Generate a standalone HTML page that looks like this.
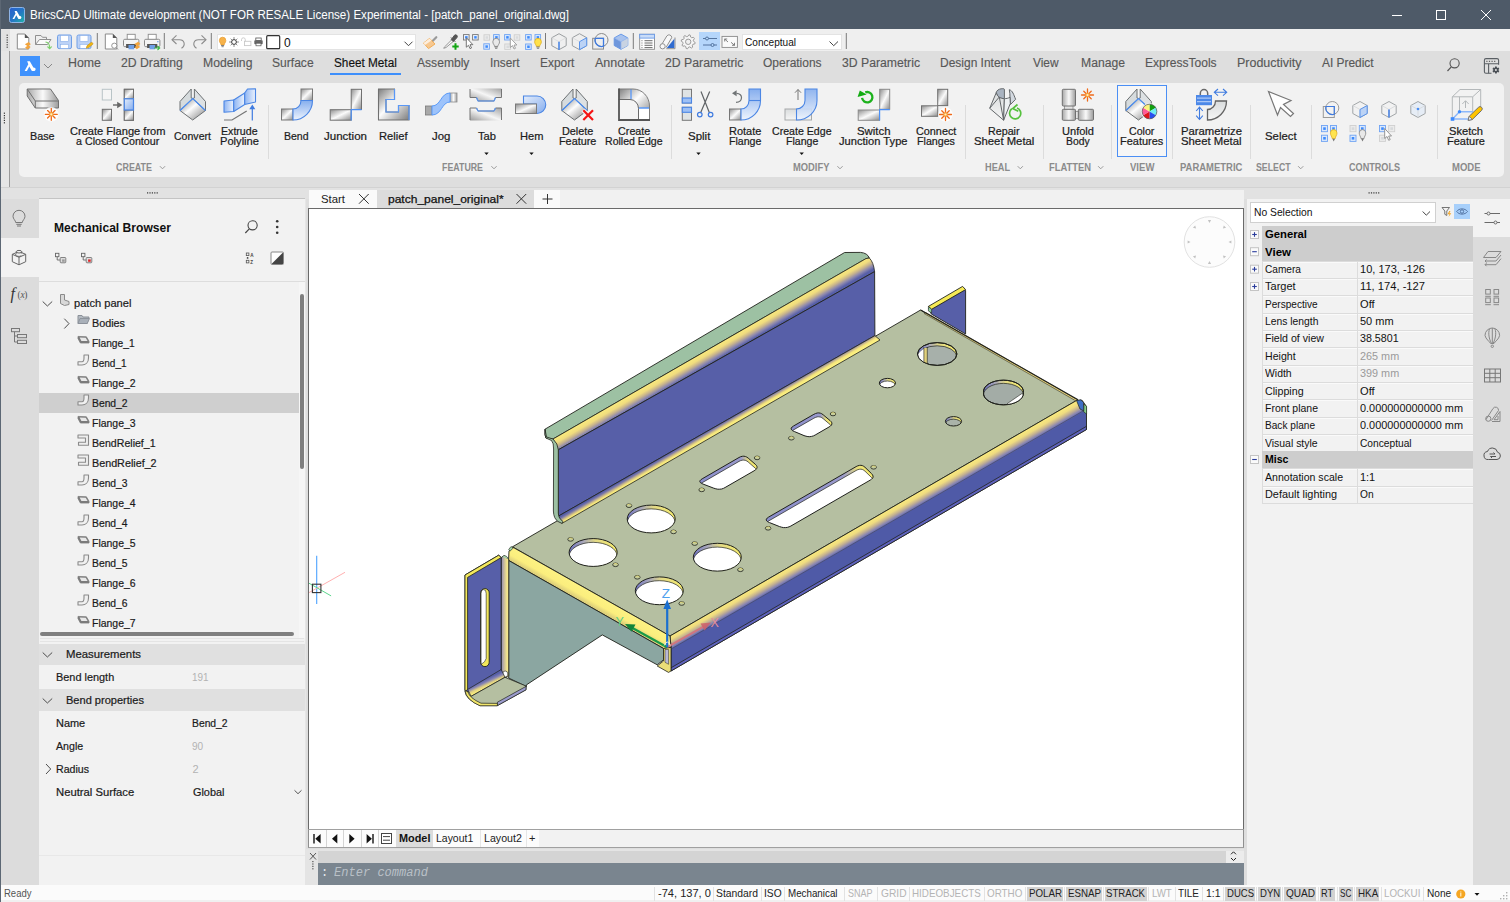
<!DOCTYPE html><html lang="en"><head><meta charset="utf-8"><title>BricsCAD</title>
<style>
*{box-sizing:border-box;margin:0;padding:0}
html,body{width:1510px;height:902px;overflow:hidden;background:#dedede}
body{position:relative;font-family:"Liberation Sans",sans-serif;font-size:12px;color:#222;-webkit-font-smoothing:antialiased}
.abs{position:absolute}
.t{position:absolute;white-space:nowrap;line-height:1}
svg{position:absolute;overflow:visible}
#title{left:0;top:0;width:1510px;height:29px;background:#4e5a68}
#title .t{color:#fff;font-size:13.4px;left:30px;top:8px}
#tbar{left:0;top:29px;width:1510px;height:22px;background:#efefef}
#tabs{left:0;top:51px;width:1510px;height:32px;background:#dedede}
#tabs .t{font-size:13px;color:#555;top:6px}
#rib{left:19px;top:83px;width:1485px;height:94px;background:#f2f2f2;border-radius:5px}
.rl{position:absolute;white-space:nowrap;text-align:center;font-size:12px;line-height:10.4px;color:#1e1e1e;transform:translateX(-50%)}
.gl{position:absolute;white-space:nowrap;font-size:10.5px;font-weight:bold;color:#8c8c8c;letter-spacing:.2px;line-height:1}
.vsep{position:absolute;width:1px;background:#dcdcdc;top:105px;height:54px}
</style>

</head><body>
<!-- sec_top -->
<div class="abs" style="left:0px;top:0px;width:1510px;height:29px;background:#4e5a68;"></div>
<div class="abs" style="left:0px;top:0px;width:1px;height:902px;background:#5c6774;"></div>
<div class="t" style="left:30.00px;top:8.84px;font-size:12px;transform:scaleX(0.9647);transform-origin:0 0;color:#fff;">BricsCAD Ultimate development (NOT FOR RESALE License) Experimental - [patch_panel_original.dwg]</div>
<svg style="left:9px;top:7px" width="16" height="16" viewBox="0 0 16 16"><defs><linearGradient id="tlg" x1="0" y1="0" x2="1" y2="1"><stop offset="0" stop-color="#2a5fd0"/><stop offset=".55" stop-color="#2478c4"/><stop offset="1" stop-color="#1fb8a6"/></linearGradient></defs><rect x=".5" y=".5" width="15" height="15" rx="2" fill="url(#tlg)" stroke="#8fb4e6" stroke-width="1"/><path d="M5.6 4h2.1l2.9 5c1.2 0 1.8.6 1.8 1.5s-.7 1.5-1.6 1.5H9.4L7.3 8.3l-2 3.7H3.5l3-5.5z" fill="#fff"/></svg>
<svg style="left:1380px;top:0" width="130" height="29" viewBox="0 0 130 29"><g stroke="#fff" stroke-width="1" fill="none"><path d="M12 15.5h10"/><rect x="56.5" y="10.5" width="9" height="9"/><path d="M101 10l10 10M111 10l-10 10"/></g></svg>
<div class="abs" style="left:1px;top:29px;width:1509px;height:22px;background:#efefef;"></div>
<div class="abs" style="left:1px;top:29px;width:9px;height:22px;background:#e2e2e2;"></div>
<div class="abs" style="left:1px;top:51px;width:1509px;height:148px;background:#dedede;"></div>
<div class="abs" style="left:1px;top:51px;width:8px;height:136px;background:#e6e6e6;"></div>
<div class="abs" style="left:9px;top:51px;width:1px;height:136px;background:#9a9a9a;"></div>
<div class="abs" style="left:1px;top:187px;width:1509px;height:1px;background:#d2d2d2;"></div>
<div class="abs" style="left:1px;top:188px;width:1509px;height:11px;background:#e2e2e2;"></div>
<div class="abs" style="left:20px;top:56px;width:20px;height:20px;background:#3f92fd;"></div>
<svg style="left:20px;top:56px" width="20" height="20" viewBox="0 0 20 20"><path d="M7.2 5.2h2.6l3.6 6.2c1.5 0 2.2.7 2.2 1.8s-.8 1.8-2 1.8h-1.7l-2.6-4.6-2.4 4.6H4.6l3.7-6.8z" fill="#fff"/></svg>
<svg style="left:43px;top:63px" width="10" height="6" viewBox="0 0 10 6"><path d="M1 1l4 4 4-4" stroke="#888" fill="none" stroke-width="1"/></svg>
<div class="t" style="left:68.00px;top:57.14px;font-size:12px;transform:scaleX(1.0309);transform-origin:0 0;color:#585858;-webkit-text-stroke:0.15px;">Home</div>
<div class="t" style="left:120.60px;top:57.14px;font-size:12px;transform:scaleX(1.0182);transform-origin:0 0;color:#585858;-webkit-text-stroke:0.15px;">2D Drafting</div>
<div class="t" style="left:203.00px;top:57.14px;font-size:12px;transform:scaleX(1.0144);transform-origin:0 0;color:#585858;-webkit-text-stroke:0.15px;">Modeling</div>
<div class="t" style="left:272.40px;top:57.14px;font-size:12px;transform:scaleX(1.0059);transform-origin:0 0;color:#585858;-webkit-text-stroke:0.15px;">Surface</div>
<div class="t" style="left:333.60px;top:57.14px;font-size:12px;transform:scaleX(0.9807);transform-origin:0 0;color:#111;-webkit-text-stroke:0.15px;">Sheet Metal</div>
<div class="t" style="left:417.00px;top:57.14px;font-size:12px;transform:scaleX(1.0074);transform-origin:0 0;color:#585858;-webkit-text-stroke:0.15px;">Assembly</div>
<div class="t" style="left:490.00px;top:57.14px;font-size:12px;transform:scaleX(0.9796);transform-origin:0 0;color:#585858;-webkit-text-stroke:0.15px;">Insert</div>
<div class="t" style="left:540.00px;top:57.14px;font-size:12px;transform:scaleX(0.9918);transform-origin:0 0;color:#585858;-webkit-text-stroke:0.15px;">Export</div>
<div class="t" style="left:595.00px;top:57.14px;font-size:12px;transform:scaleX(1.0408);transform-origin:0 0;color:#585858;-webkit-text-stroke:0.15px;">Annotate</div>
<div class="t" style="left:664.60px;top:57.14px;font-size:12px;transform:scaleX(1.0223);transform-origin:0 0;color:#585858;-webkit-text-stroke:0.15px;">2D Parametric</div>
<div class="t" style="left:763.00px;top:57.14px;font-size:12px;transform:scaleX(0.9983);transform-origin:0 0;color:#585858;-webkit-text-stroke:0.15px;">Operations</div>
<div class="t" style="left:842.00px;top:57.14px;font-size:12px;transform:scaleX(1.0171);transform-origin:0 0;color:#585858;-webkit-text-stroke:0.15px;">3D Parametric</div>
<div class="t" style="left:940.00px;top:57.14px;font-size:12px;transform:scaleX(0.9984);transform-origin:0 0;color:#585858;-webkit-text-stroke:0.15px;">Design Intent</div>
<div class="t" style="left:1033.00px;top:57.14px;font-size:12px;transform:scaleX(0.9925);transform-origin:0 0;color:#585858;-webkit-text-stroke:0.15px;">View</div>
<div class="t" style="left:1081.00px;top:57.14px;font-size:12px;transform:scaleX(1.0146);transform-origin:0 0;color:#585858;-webkit-text-stroke:0.15px;">Manage</div>
<div class="t" style="left:1145.00px;top:57.14px;font-size:12px;transform:scaleX(1.0033);transform-origin:0 0;color:#585858;-webkit-text-stroke:0.15px;">ExpressTools</div>
<div class="t" style="left:1237.00px;top:57.14px;font-size:12px;transform:scaleX(1.0383);transform-origin:0 0;color:#585858;-webkit-text-stroke:0.15px;">Productivity</div>
<div class="t" style="left:1322.00px;top:57.14px;font-size:12px;transform:scaleX(0.9919);transform-origin:0 0;color:#585858;-webkit-text-stroke:0.15px;">AI Predict</div>
<div class="abs" style="left:330px;top:73px;width:71px;height:2px;background:#3d8ffc;"></div>
<!-- sec_toolbar -->
<div class="abs" style="left:217px;top:34px;width:199px;height:16px;background:#ffffff;border:1px solid #e3e3e3"></div>
<div class="abs" style="left:742px;top:34px;width:100px;height:16px;background:#ffffff;border:1px solid #e3e3e3"></div>
<div class="abs" style="left:699px;top:32px;width:21px;height:18px;background:#b5d6fb;"></div>
<div class="t" style="left:284.00px;top:36.84px;font-size:12px;color:#111;">0</div>
<div class="t" style="left:745.00px;top:36.59px;font-size:11px;transform:scaleX(0.9164);transform-origin:0 0;color:#111;">Conceptual</div>
<svg style="left:0;top:0" width="1510" height="52" viewBox="0 0 1510 52"><rect x="6.6" y="34.6" width="1.2" height="1.2" fill="#444"/><rect x="6.6" y="37" width="1.2" height="1.2" fill="#444"/><rect x="6.6" y="39.4" width="1.2" height="1.2" fill="#444"/><rect x="6.6" y="41.8" width="1.2" height="1.2" fill="#444"/><rect x="6.6" y="44.2" width="1.2" height="1.2" fill="#444"/><rect x="6.6" y="46.6" width="1.2" height="1.2" fill="#444"/><path d="M97.3 33V49" stroke="#7a7a7a" stroke-width="1"/><path d="M164.3 33V49" stroke="#7a7a7a" stroke-width="1"/><path d="M211.3 33V49" stroke="#7a7a7a" stroke-width="1"/><path d="M545.5 33V49" stroke="#7a7a7a" stroke-width="1"/><path d="M633.3 33V49" stroke="#7a7a7a" stroke-width="1"/><path d="M846.3 33V49" stroke="#7a7a7a" stroke-width="1"/><path d="M17.3 34H24.8L28.8 38V49H17.3Z" fill="#fff" stroke="#8a8a8a" stroke-width="1"/><path d="M24.8 34V38H28.8Z" fill="#555"/><path d="M28.7 42.0L30.9 44.3L28.5 45.5L30.7 47.1L27.2 49.5L25.099999999999998 47.3L27.3 46.0L24.9 44.2Z" fill="#f3a43c"/><path d="M35.5 44.5V35.5H41L42.5 37.3H46.5V39.5" fill="none" stroke="#909090" stroke-width="1"/><path d="M35.5 44.5L39.5 39.5H51L47.5 44.5Z" fill="#fafafa" stroke="#909090" stroke-width="1" stroke-linejoin="round"/><path d="M45.5 42C48.5 42.3 49.7 44.5 49.7 48.3M47.5 46.5L49.7 48.8L51.8 46.5" fill="none" stroke="#7ccf6a" stroke-width="1.1"/><rect x="57.5" y="35" width="14" height="13.6" rx="1.6" fill="#bcd2f6" stroke="#709fe6" stroke-width="1"/><rect x="60.5" y="35.6" width="8" height="5.8" fill="#fff" stroke="#8ab0ea" stroke-width=".6"/><rect x="60.5" y="44.3" width="8" height="4" fill="#fff" stroke="#8ab0ea" stroke-width=".6"/><rect x="77" y="35" width="14" height="13.6" rx="1.6" fill="#bcd2f6" stroke="#709fe6" stroke-width="1"/><rect x="80" y="35.6" width="8" height="5.8" fill="#fff" stroke="#8ab0ea" stroke-width=".6"/><rect x="80" y="44.3" width="8" height="4" fill="#fff" stroke="#8ab0ea" stroke-width=".6"/><path d="M86.3 48.2L87 45.8L91 42.5A1.4 1.4 0 0 1 92.8 44.3L88.7 47.6Z" fill="#f2b611" stroke="#c48f10" stroke-width=".6"/><path d="M105.3 34H112.8L116.8 38V49H105.3Z" fill="#fff" stroke="#8a8a8a" stroke-width="1"/><path d="M112.8 34V38H116.8Z" fill="#555"/><circle cx="114.3" cy="45.7" r="2.6" fill="#fff" stroke="#8a8a8a" stroke-width=".9"/><path d="M116.2 47.7L118 49.5" stroke="#8a8a8a" stroke-width="1"/><rect x="127.2" y="34.3" width="8" height="5.2" fill="#fff" stroke="#8a8a8a" stroke-width=".9"/><rect x="123.5" y="39.3" width="15.4" height="7.4" rx="1.3" fill="#f4f4f4" stroke="#8a8a8a" stroke-width="1"/><rect x="126.1" y="44" width="10.2" height="4" fill="#555"/><rect x="128.5" y="45" width="5.6" height="4.3" fill="#6f9fe6"/><path d="M138.2 41.8L140.39999999999998 44.099999999999994L138.0 45.3L140.2 46.9L136.7 49.3L134.6 47.099999999999994L136.79999999999998 45.8L134.39999999999998 44.0Z" fill="#f3a43c"/><rect x="148.2" y="34.3" width="8" height="5.2" fill="#fff" stroke="#8a8a8a" stroke-width=".9"/><rect x="144.5" y="39.3" width="15.4" height="7.4" rx="1.3" fill="#f4f4f4" stroke="#8a8a8a" stroke-width="1"/><rect x="147.1" y="44" width="10.2" height="4" fill="#555"/><rect x="149.5" y="45" width="5.6" height="4.3" fill="#6f9fe6"/><path d="M154 48H159.5M157.5 46L159.7 48L157.5 50" fill="none" stroke="#3fba4a" stroke-width="1.1"/><rect x="157.2" y="41" width="1.3" height="1.3" fill="#6f9fe6"/><path d="M172.3 39.7H179.5C184.5 39.7 186 45 181.5 48.3" fill="none" stroke="#8c8c8c" stroke-width="1.1"/><path d="M176.5 35.3L172 39.7L176.5 44" fill="none" stroke="#8c8c8c" stroke-width="1.1"/><path d="M205.7 39.7H198.5C193.5 39.7 192 45 196.5 48.3" fill="none" stroke="#8c8c8c" stroke-width="1.1"/><path d="M201.5 35.3L206 39.7L201.5 44" fill="none" stroke="#8c8c8c" stroke-width="1.1"/><g transform="translate(222.6 41.3) scale(1.0)"><path d="M-3.2 -.8A3.2 3.3 0 1 1 3.2 -.8C3.2 1.4 1.6 2 1.6 3.6H-1.6C-1.6 2 -3.2 1.4 -3.2 -.8Z" fill="#f6b24a" stroke="#e89a2a" stroke-width=".7"/><path d="M-1.5 4.2H1.5M-1.1 5.4H1.1" stroke="#777" stroke-width=".9"/></g><circle cx="234" cy="42" r="2.4" fill="none" stroke="#333" stroke-width="1"/><path d="M234 37.4V38.6M234 45.4V46.6M229.4 42H230.6M237.4 42H238.6M230.8 38.8L231.6 39.6M236.4 44.4L237.2 45.2M237.2 38.8L236.4 39.6M231.6 44.4L230.8 45.2" stroke="#333" stroke-width=".9"/><rect x="244.5" y="41.3" width="6.4" height="4.3" fill="none" stroke="#c9c9c9" stroke-width=".9"/><path d="M241.5 41V39.7A1.9 1.9 0 0 1 245.3 39.7V41.3" fill="none" stroke="#c9c9c9" stroke-width=".9"/><rect x="255.8" y="38" width="5.4" height="2.4" fill="#fff" stroke="#555" stroke-width=".8"/><rect x="254.3" y="40.2" width="8.4" height="4" rx=".8" fill="#666"/><rect x="256" y="43.2" width="5" height="2.6" fill="#fff" stroke="#555" stroke-width=".7"/><rect x="266.7" y="35.7" width="13" height="13" rx="1" fill="#fff" stroke="#333" stroke-width="1.2"/><path d="M404.5 41.7L408.5 45.7L412.5 41.7" fill="none" stroke="#444" stroke-width="1"/><path d="M829.5 41.5L833.7 45.7L838 41.5" fill="none" stroke="#444" stroke-width="1"/><path d="M436.3 37.2L431.3 42.2" stroke="#9a9a9a" stroke-width="2.2" stroke-linecap="round"/><path d="M423.5 43L429.6 38.4L435 44L428.5 48.6Z" fill="#f7c890" stroke="#f0a84e" stroke-width=".9" stroke-linejoin="round"/><path d="M423.5 43L429.6 38.4L431.5 40.5L425 45Z" fill="#fdeedd"/><path d="M452.5 39L444.3 47.2Q443.3 48.7 443.8 48.3L446 47.5L454.2 40.7" fill="#fafafa" stroke="#8a8a8a" stroke-width=".9"/><path d="M451 37.5L455.3 41.8M454.5 35.2Q456.5 34 457.3 36Q457.5 37.5 455.7 39L453.2 41.5L451.3 39.6Z" fill="#555" stroke="#555" stroke-width="1"/><path d="M455.5 43.3V49.7M452.3 46.5H458.7" stroke="#12a512" stroke-width="2"/><rect x="463.5" y="34.6" width="5.6" height="5.4" fill="#eef3fb" stroke="#777" stroke-width=".9"/><rect x="465.1" y="36.1" width="2.5" height="2.5" fill="#3d8bfd"/><rect x="472.6" y="34.6" width="5.6" height="5.4" fill="#eef3fb" stroke="#777" stroke-width=".9"/><rect x="474.2" y="36.1" width="2.5" height="2.5" fill="#3d8bfd"/><path d="M466.3 37.7V47.2L468.5 45.300000000000004L470.1 48.7L471.5 48.0L470.0 44.7H472.90000000000003Z" fill="#fff" stroke="#666" stroke-width=".9" stroke-linejoin="round"/><rect x="484" y="34.8" width="5.6" height="5.4" fill="#ececec" stroke="#cfcfcf" stroke-width=".9"/><rect x="485.6" y="36.3" width="2.5" height="2.5" fill="#d8dadc"/><rect x="493.6" y="34.6" width="5.6" height="5.4" fill="#dce9fb" stroke="#6fa3f3" stroke-width=".9"/><rect x="495.20000000000005" y="36.1" width="2.5" height="2.5" fill="#3d8bfd"/><rect x="483.8" y="43.8" width="5.6" height="5.4" fill="#dce9fb" stroke="#6fa3f3" stroke-width=".9"/><rect x="485.40000000000003" y="45.3" width="2.5" height="2.5" fill="#3d8bfd"/><g transform="translate(496.2 42.6) scale(1.05)"><path d="M-3.2 -.8A3.2 3.3 0 1 1 3.2 -.8C3.2 1.4 1.6 2 1.6 3.6H-1.6C-1.6 2 -3.2 1.4 -3.2 -.8Z" fill="#e9e9e9" stroke="#777" stroke-width=".7"/><path d="M-1.5 4.2H1.5M-1.1 5.4H1.1" stroke="#777" stroke-width=".9"/></g><rect x="504.6" y="34.6" width="5.6" height="5.4" fill="#dce9fb" stroke="#6fa3f3" stroke-width=".9"/><rect x="506.20000000000005" y="36.1" width="2.5" height="2.5" fill="#3d8bfd"/><rect x="514.2" y="34.8" width="5.6" height="5.4" fill="#ececec" stroke="#cfcfcf" stroke-width=".9"/><rect x="515.8000000000001" y="36.3" width="2.5" height="2.5" fill="#d8dadc"/><rect x="504.8" y="44" width="5.6" height="5.4" fill="#ececec" stroke="#cfcfcf" stroke-width=".9"/><rect x="506.40000000000003" y="45.5" width="2.5" height="2.5" fill="#d8dadc"/><path d="M510.3 38V47.5L512.5 45.6L514.1 49L515.5 48.3L514.0 45H516.9Z" fill="#fff" stroke="#999" stroke-width=".9" stroke-linejoin="round"/><rect x="525.6" y="34.6" width="5.6" height="5.4" fill="#dce9fb" stroke="#6fa3f3" stroke-width=".9"/><rect x="527.2" y="36.1" width="2.5" height="2.5" fill="#3d8bfd"/><rect x="535" y="34.6" width="5.6" height="5.4" fill="#dce9fb" stroke="#6fa3f3" stroke-width=".9"/><rect x="536.6" y="36.1" width="2.5" height="2.5" fill="#3d8bfd"/><rect x="525.6" y="44" width="5.6" height="5.4" fill="#dce9fb" stroke="#6fa3f3" stroke-width=".9"/><rect x="527.2" y="45.5" width="2.5" height="2.5" fill="#3d8bfd"/><g transform="translate(538 42.6) scale(1.05)"><path d="M-3.2 -.8A3.2 3.3 0 1 1 3.2 -.8C3.2 1.4 1.6 2 1.6 3.6H-1.6C-1.6 2 -3.2 1.4 -3.2 -.8Z" fill="#ffe14a" stroke="#dda915" stroke-width=".7"/><path d="M-1.5 4.2H1.5M-1.1 5.4H1.1" stroke="#777" stroke-width=".9"/></g><polygon points="559,33.7 566.2,37.7 566.2,45.7 559,49.7 551.8,45.7 551.8,37.7" fill="none" stroke="#9a9ea0" stroke-width="1"/><path d="M551.8 37.7L559 41.7L566.2 37.7" fill="none" stroke="#d9dbdc" stroke-width=".8"/><path d="M559 41.7V49.7" stroke="#4b86e4" stroke-width="1.6"/><polygon points="579.5,33.7 586.7,37.7 586.7,45.7 579.5,49.7 572.3,45.7 572.3,37.7" fill="none" stroke="#9a9ea0" stroke-width="1"/><path d="M572.3 37.7L579.5 41.7" fill="none" stroke="#d9dbdc" stroke-width=".8"/><polygon points="579.5,41.7 586.7,37.7 586.7,45.7 579.5,49.7" fill="#bcd3f5" stroke="#5a93ea" stroke-width="1"/><rect x="592.7" y="38.3" width="10.8" height="10.8" fill="none" stroke="#8a8a8a" stroke-width="1"/><circle cx="601.5" cy="40" r="6.5" fill="none" stroke="#8a8a8a" stroke-width="1"/><path d="M595.3 38.3H603.5V46.2A6.5 6.5 0 0 1 595.3 38.3Z" fill="none" stroke="#3f7be0" stroke-width="1.3"/><polygon points="621,34.1 627.8,37.900000000000006 627.8,45.5 621,49.300000000000004 614.2,45.5 614.2,37.900000000000006" fill="#a9c3ee" stroke="#6a9be8" stroke-width="1"/><polygon points="614.2,37.900000000000006 621,41.7 621,49.300000000000004 614.2,45.5" fill="#6f97dc"/><polygon points="621,41.7 627.8,37.900000000000006 627.8,45.5 621,49.300000000000004" fill="#c9d3e2"/><path d="M614.2 37.900000000000006L621 41.7L627.8 37.900000000000006M621 41.7V49.300000000000004" fill="none" stroke="#8fb2ec" stroke-width=".7"/><rect x="639.7" y="34.3" width="14.8" height="15" fill="#fff" stroke="#8a8a8a" stroke-width=".9"/><rect x="639.7" y="34.3" width="14.8" height="3.8" fill="#c9dcf8" stroke="#6a9be8" stroke-width=".9"/><path d="M644.5 40.7H652.5M644.5 43H652.5M644.5 45.3H652.5M644.5 47.6H652.5" stroke="#444" stroke-width=".8"/><path d="M641.3 40.7H642.6M641.3 43H642.6M641.3 45.3H642.6M641.3 47.6H642.6" stroke="#777" stroke-width=".8"/><path d="M660.5 46.5L666.8 36A2.7 2.7 0 0 1 671.7 37.7L666 47.5" fill="#f8f8f8" stroke="#909090" stroke-width="1"/><circle cx="662.6" cy="46.3" r="2.6" fill="#f8f8f8" stroke="#909090" stroke-width="1"/><path d="M666.3 48.7H675V37.5" fill="none" stroke="#909090" stroke-width="1"/><path d="M666.8 48L674.3 38.8V48Z" fill="#2f6bd0"/><polygon points="695.2,42.5 694.9,43.8 692.9,44.3 692.3,45.2 692.6,47.2 691.5,48.0 689.7,46.9 688.7,47.1 687.5,48.8 686.2,48.5 685.7,46.5 684.8,45.9 682.8,46.2 682.0,45.1 683.1,43.3 682.9,42.3 681.2,41.1 681.5,39.8 683.5,39.3 684.1,38.4 683.8,36.4 684.9,35.6 686.7,36.7 687.7,36.5 688.9,34.8 690.2,35.1 690.7,37.1 691.6,37.7 693.6,37.4 694.4,38.5 693.3,40.3 693.5,41.3" fill="#f6f6f6" stroke="#9a9a9a" stroke-width="1" stroke-linejoin="round"/><circle cx="688.2" cy="41.8" r="2.7" fill="#efefef" stroke="#9a9a9a" stroke-width="1"/><path d="M703 38.5H705.5M708.5 38.5H717M703 45H711M714 45H717" stroke="#4a6a95" stroke-width=".9"/><circle cx="707" cy="38.5" r="1.5" fill="none" stroke="#4a6a95" stroke-width=".9"/><circle cx="712.5" cy="45" r="1.5" fill="none" stroke="#4a6a95" stroke-width=".9"/><rect x="722" y="36.4" width="15.4" height="11" fill="#fafafa" stroke="#8a8a8a" stroke-width=".9"/><path d="M724.7 39L728 42M724.7 41.5V39H727.2M731 42.3L734.5 45.3M734.5 42.8V45.3H732" fill="none" stroke="#666" stroke-width=".8"/></svg>
<svg style="left:0;top:0" width="1510" height="200" viewBox="0 0 1510 200"><circle cx="1454.6" cy="63.3" r="4.6" fill="none" stroke="#555" stroke-width="1.1"/><path d="M1451.3 66.8L1447.5 71" stroke="#555" stroke-width="1.2"/><g fill="none" stroke="#5a5f64" stroke-width="1.1"><path d="M1491.5 73.3H1486A1.6 1.6 0 0 1 1484.4 71.7V60.2A1.6 1.6 0 0 1 1486 58.6H1497A1.6 1.6 0 0 1 1498.6 60.2V64.8"/><path d="M1484.4 63.8H1498.6M1488.6 63.8V73.3"/></g><path d="M1486.3 61.3H1487.5M1488.9 61.3H1490.1M1491.5 61.3H1492.7M1494.1 61.3H1495.3" stroke="#444" stroke-width="1"/><polygon points="1495.09,66.49 1496.71,66.49 1497.05,68.01 1497.05,68.01 1498.53,67.54 1499.34,68.95 1498.20,70.00 1498.20,70.00 1499.34,71.05 1498.53,72.46 1497.05,71.99 1497.05,71.99 1496.71,73.51 1495.09,73.51 1494.75,71.99 1494.75,71.99 1493.27,72.46 1492.46,71.05 1493.60,70.00 1493.60,70.00 1492.46,68.95 1493.27,67.54 1494.75,68.01 1494.75,68.01" fill="#4a4f55"/><circle cx="1495.9" cy="70" r="1.05" fill="#dedede"/>
<rect x="3.8" y="112.6" width="1.2" height="1.2" fill="#333"/><rect x="3.8" y="115" width="1.2" height="1.2" fill="#333"/><rect x="3.8" y="117.4" width="1.2" height="1.2" fill="#333"/><rect x="3.8" y="119.8" width="1.2" height="1.2" fill="#333"/><rect x="3.8" y="122.2" width="1.2" height="1.2" fill="#333"/>
<rect x="147.0" y="192.3" width="1.2" height="1.2" fill="#333"/><rect x="149.4" y="192.3" width="1.2" height="1.2" fill="#333"/><rect x="151.8" y="192.3" width="1.2" height="1.2" fill="#333"/><rect x="154.2" y="192.3" width="1.2" height="1.2" fill="#333"/><rect x="156.6" y="192.3" width="1.2" height="1.2" fill="#333"/>
<rect x="1368.5" y="192.3" width="1.2" height="1.2" fill="#333"/><rect x="1370.9" y="192.3" width="1.2" height="1.2" fill="#333"/><rect x="1373.3" y="192.3" width="1.2" height="1.2" fill="#333"/><rect x="1375.7" y="192.3" width="1.2" height="1.2" fill="#333"/><rect x="1378.1" y="192.3" width="1.2" height="1.2" fill="#333"/>
</svg>
<!-- sec_ribbon -->
<div class="abs" id="rib"></div>
<div class="vsep" style="left:268.0px"></div>
<div class="vsep" style="left:670.9px"></div>
<div class="vsep" style="left:965.1px"></div>
<div class="vsep" style="left:1042.9px"></div>
<div class="vsep" style="left:1111.1px"></div>
<div class="vsep" style="left:1171.5px"></div>
<div class="vsep" style="left:1249.9px"></div>
<div class="vsep" style="left:1310.9px"></div>
<div class="vsep" style="left:1436.9px"></div>
<div class="abs" style="left:1117px;top:85px;width:50px;height:72px;border:1px solid #4b8ff5;background:#f6f6f6"></div>
<div class="t" style="left:30.40px;top:130.52px;font-size:11.2px;transform:scaleX(0.9636);transform-origin:0 0;color:#1c1c1c;-webkit-text-stroke:0.22px;">Base</div>
<div class="t" style="left:174.00px;top:130.52px;font-size:11.2px;transform:scaleX(0.9435);transform-origin:0 0;color:#1c1c1c;-webkit-text-stroke:0.22px;">Convert</div>
<div class="t" style="left:284.40px;top:130.52px;font-size:11.2px;transform:scaleX(0.9404);transform-origin:0 0;color:#1c1c1c;-webkit-text-stroke:0.22px;">Bend</div>
<div class="t" style="left:323.60px;top:130.52px;font-size:11.2px;transform:scaleX(1.0308);transform-origin:0 0;color:#1c1c1c;-webkit-text-stroke:0.22px;">Junction</div>
<div class="t" style="left:379.40px;top:130.52px;font-size:11.2px;transform:scaleX(0.9988);transform-origin:0 0;color:#1c1c1c;-webkit-text-stroke:0.22px;">Relief</div>
<div class="t" style="left:431.60px;top:130.52px;font-size:11.2px;transform:scaleX(1.0189);transform-origin:0 0;color:#1c1c1c;-webkit-text-stroke:0.22px;">Jog</div>
<div class="t" style="left:478.00px;top:130.52px;font-size:11.2px;transform:scaleX(0.9968);transform-origin:0 0;color:#1c1c1c;-webkit-text-stroke:0.22px;">Tab</div>
<div class="t" style="left:520.00px;top:130.52px;font-size:11.2px;transform:scaleX(0.9895);transform-origin:0 0;color:#1c1c1c;-webkit-text-stroke:0.22px;">Hem</div>
<div class="t" style="left:687.60px;top:130.52px;font-size:11.2px;transform:scaleX(1.0281);transform-origin:0 0;color:#1c1c1c;-webkit-text-stroke:0.22px;">Split</div>
<div class="t" style="left:1265.00px;top:130.52px;font-size:11.2px;transform:scaleX(1.0151);transform-origin:0 0;color:#1c1c1c;-webkit-text-stroke:0.22px;">Select</div>
<div class="t" style="left:69.60px;top:125.52px;font-size:11.2px;transform:scaleX(0.9908);transform-origin:0 0;color:#1c1c1c;-webkit-text-stroke:0.22px;">Create Flange from</div>
<div class="t" style="left:76.00px;top:135.92px;font-size:11.2px;transform:scaleX(0.9568);transform-origin:0 0;color:#1c1c1c;-webkit-text-stroke:0.22px;">a Closed Contour</div>
<div class="t" style="left:221.40px;top:125.52px;font-size:11.2px;transform:scaleX(0.9482);transform-origin:0 0;color:#1c1c1c;-webkit-text-stroke:0.22px;">Extrude</div>
<div class="t" style="left:220.00px;top:135.92px;font-size:11.2px;transform:scaleX(0.9943);transform-origin:0 0;color:#1c1c1c;-webkit-text-stroke:0.22px;">Polyline</div>
<div class="t" style="left:562.00px;top:125.52px;font-size:11.2px;transform:scaleX(0.9699);transform-origin:0 0;color:#1c1c1c;-webkit-text-stroke:0.22px;">Delete</div>
<div class="t" style="left:559.00px;top:135.92px;font-size:11.2px;transform:scaleX(0.9689);transform-origin:0 0;color:#1c1c1c;-webkit-text-stroke:0.22px;">Feature</div>
<div class="t" style="left:617.60px;top:125.52px;font-size:11.2px;transform:scaleX(0.9638);transform-origin:0 0;color:#1c1c1c;-webkit-text-stroke:0.22px;">Create</div>
<div class="t" style="left:605.00px;top:135.92px;font-size:11.2px;transform:scaleX(0.9439);transform-origin:0 0;color:#1c1c1c;-webkit-text-stroke:0.22px;">Rolled Edge</div>
<div class="t" style="left:728.60px;top:125.52px;font-size:11.2px;transform:scaleX(0.9819);transform-origin:0 0;color:#1c1c1c;-webkit-text-stroke:0.22px;">Rotate</div>
<div class="t" style="left:728.60px;top:135.92px;font-size:11.2px;transform:scaleX(0.9461);transform-origin:0 0;color:#1c1c1c;-webkit-text-stroke:0.22px;">Flange</div>
<div class="t" style="left:772.00px;top:125.52px;font-size:11.2px;transform:scaleX(0.9477);transform-origin:0 0;color:#1c1c1c;-webkit-text-stroke:0.22px;">Create Edge</div>
<div class="t" style="left:785.60px;top:135.92px;font-size:11.2px;transform:scaleX(0.9461);transform-origin:0 0;color:#1c1c1c;-webkit-text-stroke:0.22px;">Flange</div>
<div class="t" style="left:857.00px;top:125.52px;font-size:11.2px;transform:scaleX(1.0185);transform-origin:0 0;color:#1c1c1c;-webkit-text-stroke:0.22px;">Switch</div>
<div class="t" style="left:839.40px;top:135.92px;font-size:11.2px;transform:scaleX(0.9955);transform-origin:0 0;color:#1c1c1c;-webkit-text-stroke:0.22px;">Junction Type</div>
<div class="t" style="left:916.00px;top:125.52px;font-size:11.2px;transform:scaleX(0.9684);transform-origin:0 0;color:#1c1c1c;-webkit-text-stroke:0.22px;">Connect</div>
<div class="t" style="left:917.40px;top:135.92px;font-size:11.2px;transform:scaleX(0.9537);transform-origin:0 0;color:#1c1c1c;-webkit-text-stroke:0.22px;">Flanges</div>
<div class="t" style="left:988.40px;top:125.52px;font-size:11.2px;transform:scaleX(0.9577);transform-origin:0 0;color:#1c1c1c;-webkit-text-stroke:0.22px;">Repair</div>
<div class="t" style="left:974.00px;top:135.92px;font-size:11.2px;transform:scaleX(1.0105);transform-origin:0 0;color:#1c1c1c;-webkit-text-stroke:0.22px;">Sheet Metal</div>
<div class="t" style="left:1062.00px;top:125.52px;font-size:11.2px;transform:scaleX(0.9884);transform-origin:0 0;color:#1c1c1c;-webkit-text-stroke:0.22px;">Unfold</div>
<div class="t" style="left:1066.40px;top:135.92px;font-size:11.2px;transform:scaleX(0.9244);transform-origin:0 0;color:#1c1c1c;-webkit-text-stroke:0.22px;">Body</div>
<div class="t" style="left:1129.00px;top:125.52px;font-size:11.2px;transform:scaleX(0.9490);transform-origin:0 0;color:#1c1c1c;-webkit-text-stroke:0.22px;">Color</div>
<div class="t" style="left:1120.00px;top:135.92px;font-size:11.2px;transform:scaleX(0.9819);transform-origin:0 0;color:#1c1c1c;-webkit-text-stroke:0.22px;">Features</div>
<div class="t" style="left:1181.00px;top:125.52px;font-size:11.2px;transform:scaleX(1.0103);transform-origin:0 0;color:#1c1c1c;-webkit-text-stroke:0.22px;">Parametrize</div>
<div class="t" style="left:1181.00px;top:135.92px;font-size:11.2px;transform:scaleX(1.0139);transform-origin:0 0;color:#1c1c1c;-webkit-text-stroke:0.22px;">Sheet Metal</div>
<div class="t" style="left:1449.00px;top:125.52px;font-size:11.2px;transform:scaleX(0.9930);transform-origin:0 0;color:#1c1c1c;-webkit-text-stroke:0.22px;">Sketch</div>
<div class="t" style="left:1447.00px;top:135.92px;font-size:11.2px;transform:scaleX(0.9845);transform-origin:0 0;color:#1c1c1c;-webkit-text-stroke:0.22px;">Feature</div>
<div class="t" style="left:116.00px;top:163.13px;font-size:10px;transform:scaleX(0.8917);transform-origin:0 0;color:#8b8b8b;font-weight:bold;">CREATE</div>
<div class="t" style="left:442.00px;top:163.13px;font-size:10px;transform:scaleX(0.8821);transform-origin:0 0;color:#8b8b8b;font-weight:bold;">FEATURE</div>
<div class="t" style="left:793.00px;top:163.13px;font-size:10px;transform:scaleX(0.9360);transform-origin:0 0;color:#8b8b8b;font-weight:bold;">MODIFY</div>
<div class="t" style="left:985.00px;top:163.13px;font-size:10px;transform:scaleX(0.9184);transform-origin:0 0;color:#8b8b8b;font-weight:bold;">HEAL</div>
<div class="t" style="left:1049.00px;top:163.13px;font-size:10px;transform:scaleX(0.9374);transform-origin:0 0;color:#8b8b8b;font-weight:bold;">FLATTEN</div>
<div class="t" style="left:1130.00px;top:163.13px;font-size:10px;transform:scaleX(0.9547);transform-origin:0 0;color:#8b8b8b;font-weight:bold;">VIEW</div>
<div class="t" style="left:1180.00px;top:163.13px;font-size:10px;transform:scaleX(0.9465);transform-origin:0 0;color:#8b8b8b;font-weight:bold;">PARAMETRIC</div>
<div class="t" style="left:1256.00px;top:163.13px;font-size:10px;transform:scaleX(0.8771);transform-origin:0 0;color:#8b8b8b;font-weight:bold;">SELECT</div>
<div class="t" style="left:1349.00px;top:163.13px;font-size:10px;transform:scaleX(0.9089);transform-origin:0 0;color:#8b8b8b;font-weight:bold;">CONTROLS</div>
<div class="t" style="left:1452.00px;top:163.13px;font-size:10px;transform:scaleX(0.9533);transform-origin:0 0;color:#8b8b8b;font-weight:bold;">MODE</div>
<svg style="left:0;top:0" width="1510" height="200" viewBox="0 0 1510 200">
<defs>
<linearGradient id="mA" x1="0" y1="0" x2="1" y2="1"><stop offset="0" stop-color="#8f8f8f"/><stop offset=".5" stop-color="#fbfbfb"/><stop offset="1" stop-color="#8c8c8c"/></linearGradient>
<linearGradient id="mB" x1="0" y1="0" x2="1" y2="0"><stop offset="0" stop-color="#a8a8a8"/><stop offset=".5" stop-color="#fafafa"/><stop offset="1" stop-color="#9c9c9c"/></linearGradient>
<linearGradient id="mD" x1="0" y1="0" x2="1" y2="1"><stop offset="0" stop-color="#7d7d7d"/><stop offset=".45" stop-color="#fdfdfd"/><stop offset="1" stop-color="#7c7c7c"/></linearGradient>
<linearGradient id="mE" x1="0" y1="1" x2="1" y2="0"><stop offset="0" stop-color="#9a9a9a"/><stop offset=".5" stop-color="#f6f6f6"/><stop offset="1" stop-color="#a2a2a2"/></linearGradient>
<linearGradient id="bV" x1="0" y1="0" x2="0" y2="1"><stop offset="0" stop-color="#86aeee"/><stop offset="1" stop-color="#eef4fd"/></linearGradient>
<linearGradient id="bH" x1="0" y1="0" x2="1" y2="0"><stop offset="0" stop-color="#8db4f3"/><stop offset="1" stop-color="#edf3fd"/></linearGradient>
<linearGradient id="bD" x1="0" y1="0" x2="1" y2="1"><stop offset="0" stop-color="#e4edfb"/><stop offset="1" stop-color="#85adee"/></linearGradient>
<linearGradient id="gL" x1="0" y1="0" x2="0" y2="1"><stop offset="0" stop-color="#d9dcdd"/><stop offset="1" stop-color="#f6f6f6"/></linearGradient>
</defs>
<polygon points="27.2,89 50.5,89 58.5,100.5 58.5,108 35.3,108 27.2,96" fill="url(#mB)" stroke="#707070" stroke-width="1" stroke-linejoin="round"/><path d="M27.2 89L35.3 101H58.5M35.3 101V108" fill="none" stroke="#707070" stroke-width="1"/>
<circle cx="51.3" cy="114.3" r="7.2" fill="#fff" opacity=".85"/><g stroke="#ef6a1a" stroke-width="1.3" stroke-linecap="round"><path d="M45.3 114.3H57.3M51.3 108.3V120.3"/><path d="M47.58 110.58L55.019999999999996 118.02M47.58 118.02L55.019999999999996 110.58"/></g><circle cx="51.3" cy="114.3" r="2.2" fill="#f7a13a"/><circle cx="51.3" cy="114.3" r="1.1" fill="#fff3c0"/>
<rect x="102.3" y="89.3" width="9.2" height="10.7" fill="#f5f5f5" stroke="#b9c4c7" stroke-width="1"/>
<rect x="102.3" y="109.3" width="9.2" height="11" fill="url(#mA)" stroke="#6e6e6e" stroke-width="1"/>
<path d="M113 105H118" stroke="#666" stroke-width="1.4"/><path d="M117.2 101.8L122.3 105L117.2 108.2Z" fill="#666"/>
<rect x="124.3" y="89.3" width="9.2" height="31" fill="url(#mA)" stroke="#6e6e6e" stroke-width="1"/><rect x="124.3" y="89.3" width="9.2" height="9.5" fill="url(#mA)" stroke="#6e6e6e"/><rect x="124.3" y="110" width="9.2" height="10.3" fill="url(#mA)" stroke="#6e6e6e"/><rect x="124.3" y="98.8" width="9.2" height="11.2" fill="url(#bD)" stroke="#4b86e4" stroke-width="1.2"/>
<polygon points="180.0,110.5 192.7,98.5 205.5,110.5 192.7,120" fill="url(#mD)" stroke="#6d7173" stroke-width="1"/><polygon points="180.0,101.5 191.2,89 191.2,98 192.7,98.5 180.0,110.5" fill="#d6dbdd" stroke="#6d7173" stroke-width="1" stroke-linejoin="round"/><polygon points="205.5,101.5 194.4,89 194.4,98 192.7,98.5 205.5,110.5" fill="#dde1e3" stroke="#6d7173" stroke-width="1" stroke-linejoin="round"/><polyline points="180.0,110.5 192.7,98.5 205.5,110.5" fill="none" stroke="#4b8ff5" stroke-width="1.2"/>
<g fill="url(#bH)" stroke="#4b86e4" stroke-width="1.1" stroke-linejoin="round"><polygon points="224,101 233.7,100 233.7,111.5 224,112.3"/><polygon points="233.7,100 244.7,93 244.7,104.5 233.7,111.5"/><polygon points="244.7,93 247.5,89 255.5,88.7 255.5,102 244.7,104.5"/></g>
<polyline points="224,120 232,120 246.7,111" fill="none" stroke="#757575" stroke-width="1.2"/><path d="M252.3 120.5V108" stroke="#3f7be0" stroke-width="1.2"/><path d="M249.3 109.3L252.3 104.6L255.3 109.3Z" fill="#3f7be0"/>
<rect x="281.5" y="109" width="11.5" height="11" fill="url(#mA)" stroke="#777" stroke-width="1"/><rect x="301" y="89" width="11.5" height="11.5" fill="url(#mA)" stroke="#777" stroke-width="1"/><path d="M301 100.5H312.5A19.5 19.5 0 0 1 293 120V109A8 8.5 0 0 0 301 100.5Z" fill="url(#bV)" stroke="#4b86e4" stroke-width="1.1"/>
<rect x="351.2" y="89.3" width="10.3" height="20.2" fill="url(#mA)" stroke="#707070"/><rect x="330.2" y="109.7" width="21" height="10.5" fill="url(#mA)" stroke="#707070"/><polyline points="351.2,120.5 351.2,109.6 361.6,109.6" fill="none" stroke="#4b8ff5" stroke-width="1.2"/>
<polygon points="378.5,89 394.5,89 394.5,99.5 386,99.5 386,112 398.5,112 398.5,105.5 409,105.5 409,120 378.5,120" fill="url(#mD)" stroke="#707070" stroke-width="1.1"/><polyline points="394.5,89 394.5,99.5 386,99.5 386,112 398.5,112 398.5,105.5 409,105.5 409,120" fill="none" stroke="#5a98f7" stroke-width="1.2"/>
<rect x="425.5" y="106" width="6.5" height="9" fill="#a9a9a9" stroke="#7a7a7a" stroke-width=".8"/><rect x="450" y="93" width="7" height="9" fill="url(#mB)" stroke="#8a8a8a" stroke-width=".8"/><path d="M432 106C441 106 440.5 93 450 93V102C441.5 102 442 115 432 115Z" fill="#9dc3fb" stroke="#5b9bf8" stroke-width="1"/>
<polygon points="470,88.5 501.5,88.5 501.5,97.5 495.5,97.5 494,101 478,101 476.5,97.5 470,97.5" fill="url(#mE)"/><polyline points="470,89 470,97.5 476.5,97.5 478,101 494,101 495.5,97.5 501.5,97.5 501.5,89" fill="none" stroke="#757575"/><polyline points="476.5,97.5 478,101 494,101 495.5,97.5" fill="none" stroke="#5a98f7" stroke-width="1.2"/>
<polygon points="470,120.5 470,108 476.5,108 478,111 494,111 495.5,108 501.5,108 501.5,120.5" fill="url(#mE)"/><polyline points="470,120 470,108 476.5,108 478,111 494,111 495.5,108 501.5,108 501.5,120" fill="none" stroke="#757575"/><polyline points="476.5,108 478,111 494,111 495.5,108" fill="none" stroke="#5a98f7" stroke-width="1.2"/>
<path d="M523.5 104V96H537A8.7 8.7 0 0 1 537 113.5H536V104Z" fill="url(#bD)" stroke="#4b86e4" stroke-width="1.1"/><rect x="515.5" y="104" width="21" height="9.5" fill="url(#mA)" stroke="#7a7a7a"/>
<polygon points="561.8,110.5 574.5,98.5 587.3,110.5 574.5,120" fill="url(#mD)" stroke="#6d7173" stroke-width="1"/><polygon points="561.8,101.5 573.0,89 573.0,98 574.5,98.5 561.8,110.5" fill="#d6dbdd" stroke="#6d7173" stroke-width="1" stroke-linejoin="round"/><polygon points="587.3,101.5 576.2,89 576.2,98 574.5,98.5 587.3,110.5" fill="#dde1e3" stroke="#6d7173" stroke-width="1" stroke-linejoin="round"/><polyline points="561.8,110.5 574.5,98.5 587.3,110.5" fill="none" stroke="#4b8ff5" stroke-width="1.2"/>
<path d="M583 110L593.3 120.3M593.3 110L583 120.3" stroke="#f3f3f3" stroke-width="4.5"/><path d="M583.3 110.3L593 120M593 110.3L583.3 120" stroke="#f51414" stroke-width="2.2"/>
<path d="M618.5 89H633A16.5 17 0 0 1 649.5 106V120H618.5Z" fill="url(#mD)"/><path d="M618.5 99.5H630A8.5 9 0 0 1 638.5 108.5V120H618.5Z" fill="#f4f4f4"/><rect x="638.5" y="108" width="11" height="12" fill="#fff"/><path d="M631 89V99.5M638.5 108H649.5" stroke="#5a98f7" stroke-width="1.3"/><path d="M618.5 99.5H630A8.5 9 0 0 1 638.5 108.5V120" fill="none" stroke="#6a6a6a" stroke-width="1"/><path d="M618.5 89H633A16.5 17 0 0 1 649.5 106V120" fill="none" stroke="#7d7d7d" stroke-width="1"/><path d="M619 88.5V120H650" fill="none" stroke="#555" stroke-width="1.8"/>
<rect x="682.3" y="89.3" width="9.2" height="13.7" fill="#dfe3e4" stroke="#777"/><rect x="682.3" y="107.3" width="9.2" height="13" fill="#dfe3e4" stroke="#777"/><rect x="682.3" y="98" width="9.2" height="5" fill="#9dc0f5" stroke="#4b86e4" stroke-width="1.1"/><rect x="682.3" y="107.3" width="9.2" height="5" fill="#9dc0f5" stroke="#4b86e4" stroke-width="1.1"/>
<path d="M701 91.5L709.3 112.5M709.7 91.5L700.7 112.5" stroke="#5f6366" stroke-width="1.2"/><circle cx="699.8" cy="114.6" r="2.3" fill="none" stroke="#3f7be0" stroke-width="1.2"/><circle cx="710.6" cy="114.6" r="2.3" fill="none" stroke="#3f7be0" stroke-width="1.2"/>
<rect x="729.5" y="109" width="11.5" height="11" fill="url(#mA)" stroke="#777" stroke-width="1"/><path d="M749 89H760.5V100.5A19.5 19.5 0 0 1 741 120V109A8 8.5 0 0 0 749 100.5Z" fill="url(#bV)" stroke="#4b86e4" stroke-width="1.1"/><path d="M749 100.5H760.5" stroke="#4b86e4" stroke-width="1.1"/>
<path d="M736 102.3C743 102 743.5 93.5 736.5 93.3" fill="none" stroke="#707476" stroke-width="1.2"/><path d="M732 93.2L736.6 90.3V96.2Z" fill="#707476"/>
<rect x="785" y="109" width="26.5" height="11" fill="url(#gL)" stroke="#a5a8a9" stroke-width="1"/><path d="M805 89H817V100.5A20.5 19.5 0 0 1 796.5 120V109A8.5 8.5 0 0 0 805 100.5Z" fill="url(#bV)" fill-opacity=".9" stroke="#4b86e4" stroke-width="1.1"/><path d="M798 100V89.5M795 92.7L798 89.5L801 92.7" fill="none" stroke="#777" stroke-width="1"/>
<rect x="879.7" y="89.3" width="10" height="20" fill="url(#mA)" stroke="#8a8a8a"/><rect x="858.2" y="110" width="21.3" height="10.3" fill="url(#mA)" stroke="#8a8a8a"/><polyline points="879.6,120.5 879.6,109.7 889.8,109.7" fill="none" stroke="#4b8ff5" stroke-width="1.2"/>
<path d="M862.05 97.92A5.2 5.2 0 1 0 865.25 92.38" fill="none" stroke="#1cb21c" stroke-width="2.3"/><path d="M857.6 97L859.8 90.6L866.6 94.6Z" fill="#12ab12"/>
<rect x="937.7" y="89.3" width="10" height="16.3" fill="url(#mA)" stroke="#707070"/><rect x="921.5" y="105.8" width="16.2" height="10.5" fill="url(#mA)" stroke="#707070"/>
<circle cx="945.5" cy="114.5" r="7.2" fill="#fff" opacity=".85"/><g stroke="#ef6a1a" stroke-width="1.3" stroke-linecap="round"><path d="M939.5 114.5H951.5M945.5 108.5V120.5"/><path d="M941.78 110.78L949.22 118.22M941.78 118.22L949.22 110.78"/></g><circle cx="945.5" cy="114.5" r="2.2" fill="#f7a13a"/><circle cx="945.5" cy="114.5" r="1.1" fill="#fff3c0"/>
<g stroke="#63676a" stroke-width="1" stroke-linejoin="round"><path d="M996.3 92.5C996.8 88.5 1004.3 88 1004.4 89.3V98.6C1000.5 98.8 997 96.6 996.3 92.5Z" fill="#a9b3c0"/><path d="M996.3 92.5L989.7 108.3L1003.6 120.2L1004.4 98.6C1000.5 98.8 997 96.6 996.3 92.5Z" fill="url(#gL)"/><path d="M1009.3 89.7C1012.5 90.5 1013.7 94.5 1015.6 99.3L1010.5 104.5L1010 97.2C1010 94.5 1009.8 92 1009.3 89.7Z" fill="#d3d9e0"/><path d="M1004.4 98.6L1003.6 120.2L1010.3 103.5L1010 97.2C1008.2 98.3 1006.3 98.7 1004.4 98.6Z" fill="#eef1f3"/><path d="M999.3 97L1003.6 120.2M989.7 108.3L999.3 97" fill="none"/></g>
<path d="M1011.8 108.8A5.6 5.6 0 1 0 1017 108" fill="none" stroke="#56c13e" stroke-width="1.7"/><path d="M1017.5 104.5L1012.8 108.5L1018.3 111.3" fill="none" stroke="#56c13e" stroke-width="1.7"/>
<rect x="1064.5" y="105.5" width="8.5" height="4" fill="#e4e4e4" stroke="#8a8a8a" stroke-width=".8"/><rect x="1075" y="111.5" width="3.5" height="7" fill="#e4e4e4" stroke="#8a8a8a" stroke-width=".8"/><rect x="1062.3" y="89.3" width="13.2" height="16.7" rx="1" fill="url(#mB)" stroke="#707070"/><rect x="1062.3" y="109.3" width="13.2" height="11" rx="1" fill="url(#mB)" stroke="#707070"/><rect x="1078.3" y="109.3" width="15.2" height="11" rx="1" fill="url(#mB)" stroke="#707070"/>
<g stroke="#ef6a1a" stroke-width="1.3" stroke-linecap="round"><path d="M1081.5 95H1093.5M1087.5 89V101"/><path d="M1083.78 91.28L1091.22 98.72M1083.78 98.72L1091.22 91.28"/></g><circle cx="1087.5" cy="95" r="2.2" fill="#f7a13a"/><circle cx="1087.5" cy="95" r="1.1" fill="#fff3c0"/>
<polygon points="1125.8,110.5 1138.5,98.5 1151.3,110.5 1138.5,120" fill="url(#mD)" stroke="#6d7173" stroke-width="1"/><polygon points="1125.8,101.5 1137.0,89 1137.0,98 1138.5,98.5 1125.8,110.5" fill="#d6dbdd" stroke="#6d7173" stroke-width="1" stroke-linejoin="round"/><polygon points="1151.3,101.5 1140.2,89 1140.2,98 1138.5,98.5 1151.3,110.5" fill="#dde1e3" stroke="#6d7173" stroke-width="1" stroke-linejoin="round"/><polyline points="1125.8,110.5 1138.5,98.5 1151.3,110.5" fill="none" stroke="#4b8ff5" stroke-width="1.2"/>
<circle cx="1149.5" cy="111.5" r="8.6" fill="#eee"/>
<path d="M1149.5 111.5L1149.50 104.20A7.3 7.3 0 0 1 1155.82 107.85Z" fill="#12a010"/>
<path d="M1149.5 111.5L1155.82 107.85A7.3 7.3 0 0 1 1155.82 115.15Z" fill="#6eeef5"/>
<path d="M1149.5 111.5L1155.82 115.15A7.3 7.3 0 0 1 1149.50 118.80Z" fill="#2750f0"/>
<path d="M1149.5 111.5L1149.50 118.80A7.3 7.3 0 0 1 1143.18 115.15Z" fill="#e0151b"/>
<path d="M1149.5 111.5L1143.18 115.15A7.3 7.3 0 0 1 1143.18 107.85Z" fill="#ff5b97"/>
<path d="M1149.5 111.5L1143.18 107.85A7.3 7.3 0 0 1 1149.50 104.20Z" fill="#fdf37a"/>
<circle cx="1149.5" cy="111.5" r="7.3" fill="none" stroke="#555" stroke-width=".7"/>
<path d="M1200.3 95V93.5A3.7 3.9 0 0 1 1207.7 93.5V95" fill="none" stroke="#6a6a6a" stroke-width="1.5"/><rect x="1196" y="95" width="16" height="10.2" fill="#4c88e8"/><path d="M1197 98.2H1211M1197 101.6H1211" stroke="#a9c6f6" stroke-width="1.3"/>
<path d="M1214.5 92.3H1226.5M1218 89L1214.3 92.3L1218 95.6M1223 89L1226.7 92.3L1223 95.6" fill="none" stroke="#3f7be0" stroke-width="1.1"/><path d="M1199.5 107.5V119M1196.2 111L1199.5 107.2L1202.8 111M1196.2 115.7L1199.5 119.5L1202.8 115.7" fill="none" stroke="#3f7be0" stroke-width="1.1"/>
<path d="M1215.5 101H1226.5A19 19 0 0 1 1207.5 120V109.5A8 8.5 0 0 0 1215.5 101Z" fill="url(#gL)" stroke="#636363" stroke-width="1.3"/>
<polygon points="1268.5,91.5 1291,100.5 1283.5,104.5 1293.5,113.5 1290.5,116.5 1280.5,107.5 1277.5,115" fill="#fff" stroke="#777" stroke-width="1.2" stroke-linejoin="miter"/>
<rect x="1323.3" y="106.5" width="11" height="11" fill="none" stroke="#9a9a9a"/><circle cx="1332.3" cy="108" r="6.5" fill="none" stroke="#9a9a9a"/><path d="M1326 106.5H1334.3V114.2A6.5 6.5 0 0 1 1326 106.5Z" fill="none" stroke="#3f7be0" stroke-width="1.2"/>
<polygon points="1360.0,101.5 1367.2,105.5 1367.2,113.5 1360.0,117.5 1352.8,113.5 1352.8,105.5" fill="none" stroke="#a2a6a8" stroke-width="1"/>
<path d="M1360 109.5L1352.8 105.5M1360 109.5L1367.2 105.5M1360 109.5V117.5" stroke="#d4d7d9" stroke-width=".8" fill="none"/>
<polygon points="1360,109.5 1367.2,105.5 1367.2,113.5 1360,117.5" fill="#bcd3f5" stroke="#5a93ea" stroke-width="1"/>
<polygon points="1389.0,101.5 1396.2,105.5 1396.2,113.5 1389.0,117.5 1381.8,113.5 1381.8,105.5" fill="none" stroke="#a2a6a8" stroke-width="1"/>
<path d="M1389 109.5L1381.8 105.5M1389 109.5L1396.2 105.5M1389 109.5V117.5" stroke="#d4d7d9" stroke-width=".8" fill="none"/>
<path d="M1389 109.5V117.5" stroke="#3f7be0" stroke-width="1.5"/>
<polygon points="1418.0,101.5 1425.2,105.5 1425.2,113.5 1418.0,117.5 1410.8,113.5 1410.8,105.5" fill="#e6edf6" stroke="#a2a6a8" stroke-width="1"/>
<path d="M1418 109.5L1410.8 105.5M1418 109.5L1425.2 105.5M1418 109.5V117.5" stroke="#d4d7d9" stroke-width=".8" fill="none"/>
<circle cx="1418" cy="109" r="1.3" fill="#4b8ff5"/>
<rect x="1321.5" y="125.5" width="6" height="6.2" fill="#dbe8fb" stroke="#6fa3f3" stroke-width=".9"/><rect x="1323.2" y="127.3" width="2.6" height="2.6" fill="#3d8bfd"/><rect x="1330.5" y="125.5" width="6" height="6.2" fill="#dbe8fb" stroke="#6fa3f3" stroke-width=".9"/><rect x="1332.2" y="127.3" width="2.6" height="2.6" fill="#3d8bfd"/><rect x="1321.5" y="135.2" width="6" height="6.2" fill="#dbe8fb" stroke="#6fa3f3" stroke-width=".9"/><rect x="1323.2" y="137.0" width="2.6" height="2.6" fill="#3d8bfd"/><path d="M1330.4 133.0A3.3 3.4 0 1 1 1337.0 133.0C1337.0 135.5 1335.3 136.5 1335.3 138.5H1332.1000000000001C1332.1000000000001 136.5 1330.4 135.5 1330.4 133.0Z" fill="#ffe450" stroke="#e0a81a" stroke-width=".7"/><path d="M1332.3 138.8H1335.1000000000001L1333.7 141.5Z" fill="#777"/>
<rect x="1350" y="125.5" width="6" height="6.2" fill="#ebebeb" stroke="#cfcfcf" stroke-width=".9"/><rect x="1351.7" y="127.3" width="2.6" height="2.6" fill="#d6d9db"/><rect x="1359.3" y="125.5" width="6" height="6.2" fill="#dbe8fb" stroke="#6fa3f3" stroke-width=".9"/><rect x="1361.0" y="127.3" width="2.6" height="2.6" fill="#3d8bfd"/><rect x="1350" y="135.2" width="6" height="6.2" fill="#dbe8fb" stroke="#6fa3f3" stroke-width=".9"/><rect x="1351.7" y="137.0" width="2.6" height="2.6" fill="#3d8bfd"/><path d="M1359.2 133.0A3.3 3.4 0 1 1 1365.8 133.0C1365.8 135.5 1364.1 136.5 1364.1 138.5H1360.9C1360.9 136.5 1359.2 135.5 1359.2 133.0Z" fill="#e8e8e8" stroke="#777" stroke-width=".7"/><path d="M1361.1 138.8H1363.9L1362.5 141.5Z" fill="#777"/>
<rect x="1379.5" y="125.5" width="6" height="6.2" fill="#dbe8fb" stroke="#6fa3f3" stroke-width=".9"/><rect x="1381.2" y="127.3" width="2.6" height="2.6" fill="#3d8bfd"/><rect x="1388.7" y="125.5" width="6" height="6.2" fill="#ebebeb" stroke="#cfcfcf" stroke-width=".9"/><rect x="1390.4" y="127.3" width="2.6" height="2.6" fill="#d6d9db"/><rect x="1379.5" y="135.2" width="6" height="6.2" fill="#ebebeb" stroke="#cfcfcf" stroke-width=".9"/><rect x="1381.2" y="137.0" width="2.6" height="2.6" fill="#d6d9db"/>
<polygon points="1384.7,128.5 1384.7,138.5 1387,136.5 1388.7,140.3 1390.2,139.6 1388.6,136 1391.5,136" fill="#fff" stroke="#8a8a8a" stroke-width=".9"/>
<g fill="none" stroke="#b4b8ba" stroke-width="1"><path d="M1452.3 119V96.8H1472.7V112"/><path d="M1452.3 96.8L1460 89.5H1480.7L1472.7 96.8"/><path d="M1480.7 89.5V107"/><path d="M1459.5 96.8V111.5"/><path d="M1465.5 108V101M1462.3 104L1465.5 100.7L1468.7 104"/></g>
<path d="M1452.5 119L1459.5 111.8H1473M1452.5 119H1468" fill="none" stroke="#8cb8fb" stroke-width="1.5"/><rect x="1450.7" y="117.2" width="3.6" height="3.6" fill="#3d8bfd"/><circle cx="1459.5" cy="111.8" r="1.7" fill="#3d8bfd"/>
<path d="M1468.2 120.3L1469.2 116.3L1478.5 107.3A2.1 2.1 0 0 1 1481.6 110.4L1472.3 119.5Z" fill="#ffc400" stroke="#6f6f6f" stroke-width="1" stroke-linejoin="round"/><path d="M1468.2 120.3L1469.2 116.3L1472.3 119.5Z" fill="#fff" stroke="#6f6f6f" stroke-width=".9"/>
<path d="M484.3 152.5H488.7L486.5 154.9Z" fill="#111"/>
<path d="M529.3 152.5H533.7L531.5 154.9Z" fill="#111"/>
<path d="M696.3 152.5H700.7L698.5 154.9Z" fill="#111"/>
<path d="M799.5 152.5H803.9000000000001L801.7 154.9Z" fill="#111"/>
<path d="M159.9 166.2L162.5 168.8L165.1 166.2" fill="none" stroke="#9a9a9a" stroke-width="1"/>
<path d="M491.4 166.2L494 168.8L496.6 166.2" fill="none" stroke="#9a9a9a" stroke-width="1"/>
<path d="M837.4 166.2L840 168.8L842.6 166.2" fill="none" stroke="#9a9a9a" stroke-width="1"/>
<path d="M1017.6999999999999 166.2L1020.3 168.8L1022.9 166.2" fill="none" stroke="#9a9a9a" stroke-width="1"/>
<path d="M1098.1000000000001 166.2L1100.7 168.8L1103.3 166.2" fill="none" stroke="#9a9a9a" stroke-width="1"/>
<path d="M1298.1000000000001 166.2L1300.7 168.8L1303.3 166.2" fill="none" stroke="#9a9a9a" stroke-width="1"/>
</svg>
<!-- sec_left -->
<div class="abs" style="left:1px;top:199px;width:38px;height:686px;background:#dcdcdc;"></div>
<div class="abs" style="left:1px;top:238px;width:38px;height:39px;background:#f2f2f2;"></div>
<div class="abs" style="left:39px;top:199px;width:266px;height:686px;background:#f2f2f2;"></div>
<div class="abs" style="left:305px;top:199px;width:1px;height:686px;background:#e6e6e6;"></div>
<div class="abs" style="left:39px;top:198px;width:266px;height:1px;background:#c4c4c4;"></div>
<div class="abs" style="left:39px;top:644px;width:266px;height:21px;background:#e0e0e0;"></div>
<div class="abs" style="left:39px;top:689px;width:266px;height:22px;background:#e0e0e0;"></div>
<div class="abs" style="left:39px;top:855px;width:266px;height:1px;background:#e8e8e8;"></div>
<div class="t" style="left:54.00px;top:221.00px;font-size:13px;transform:scaleX(0.9307);transform-origin:0 0;color:#111;font-weight:bold;">Mechanical Browser</div>
<div class="abs" style="left:39px;top:281px;width:266px;height:1px;background:#dddddd;"></div>
<div class="abs" style="left:39px;top:393px;width:260px;height:20px;background:#cfcfcf;"></div>
<div class="abs" style="left:299px;top:282px;width:6px;height:356px;background:#f6f6f6;"></div>
<div class="abs" style="left:300px;top:294px;width:4px;height:175px;background:#7f7f7f;border-radius:2px"></div>
<div class="abs" style="left:40px;top:632px;width:254px;height:4px;background:#7f7f7f;border-radius:2px"></div>
<div class="abs" style="left:40px;top:638px;width:264px;height:1px;background:#e4e4e4;"></div>
<div class="abs" style="left:40px;top:641px;width:264px;height:1px;background:#e4e4e4;"></div>
<div class="t" style="left:74.00px;top:297.69px;font-size:11px;transform:scaleX(1.0091);transform-origin:0 0;color:#1a1a1a;-webkit-text-stroke:0.2px;">patch panel</div>
<div class="t" style="left:92.40px;top:317.69px;font-size:11px;transform:scaleX(0.9811);transform-origin:0 0;color:#1a1a1a;-webkit-text-stroke:0.2px;">Bodies</div>
<div class="t" style="left:92.40px;top:337.69px;font-size:11px;transform:scaleX(0.9287);transform-origin:0 0;color:#1a1a1a;-webkit-text-stroke:0.2px;">Flange_1</div>
<div class="t" style="left:92.40px;top:357.69px;font-size:11px;transform:scaleX(0.9123);transform-origin:0 0;color:#1a1a1a;-webkit-text-stroke:0.2px;">Bend_1</div>
<div class="t" style="left:92.40px;top:377.69px;font-size:11px;transform:scaleX(0.9505);transform-origin:0 0;color:#1a1a1a;-webkit-text-stroke:0.2px;">Flange_2</div>
<div class="t" style="left:92.40px;top:397.69px;font-size:11px;transform:scaleX(0.9387);transform-origin:0 0;color:#1a1a1a;-webkit-text-stroke:0.2px;">Bend_2</div>
<div class="t" style="left:92.40px;top:417.69px;font-size:11px;transform:scaleX(0.9505);transform-origin:0 0;color:#1a1a1a;-webkit-text-stroke:0.2px;">Flange_3</div>
<div class="t" style="left:92.40px;top:437.69px;font-size:11px;transform:scaleX(0.9629);transform-origin:0 0;color:#1a1a1a;-webkit-text-stroke:0.2px;">BendRelief_1</div>
<div class="t" style="left:92.40px;top:457.69px;font-size:11px;transform:scaleX(0.9780);transform-origin:0 0;color:#1a1a1a;-webkit-text-stroke:0.2px;">BendRelief_2</div>
<div class="t" style="left:92.40px;top:477.69px;font-size:11px;transform:scaleX(0.9387);transform-origin:0 0;color:#1a1a1a;-webkit-text-stroke:0.2px;">Bend_3</div>
<div class="t" style="left:92.40px;top:497.69px;font-size:11px;transform:scaleX(0.9505);transform-origin:0 0;color:#1a1a1a;-webkit-text-stroke:0.2px;">Flange_4</div>
<div class="t" style="left:92.40px;top:517.69px;font-size:11px;transform:scaleX(0.9387);transform-origin:0 0;color:#1a1a1a;-webkit-text-stroke:0.2px;">Bend_4</div>
<div class="t" style="left:92.40px;top:537.69px;font-size:11px;transform:scaleX(0.9505);transform-origin:0 0;color:#1a1a1a;-webkit-text-stroke:0.2px;">Flange_5</div>
<div class="t" style="left:92.40px;top:557.69px;font-size:11px;transform:scaleX(0.9387);transform-origin:0 0;color:#1a1a1a;-webkit-text-stroke:0.2px;">Bend_5</div>
<div class="t" style="left:92.40px;top:577.69px;font-size:11px;transform:scaleX(0.9505);transform-origin:0 0;color:#1a1a1a;-webkit-text-stroke:0.2px;">Flange_6</div>
<div class="t" style="left:92.40px;top:597.69px;font-size:11px;transform:scaleX(0.9387);transform-origin:0 0;color:#1a1a1a;-webkit-text-stroke:0.2px;">Bend_6</div>
<div class="t" style="left:92.40px;top:617.69px;font-size:11px;transform:scaleX(0.9505);transform-origin:0 0;color:#1a1a1a;-webkit-text-stroke:0.2px;">Flange_7</div>
<svg style="left:0;top:0" width="310" height="902" viewBox="0 0 310 902"><path d="M78 336.4L86.4 336.8L89 341.2V343H80.4L78 338.6Z" fill="#7b7b7b" stroke="#7b7b7b" stroke-width=".8" stroke-linejoin="round"/><path d="M79.6 337.4L85.7 337.7L87.6 341.1H81.4Z" fill="#e8e8e8"/><path d="M84 355H88.5V358C88.5 362.5 85.5 365 82 365H78V361.7H82C83.5 361.7 84 360.5 84 358Z" fill="#f0f0f0" stroke="#8a8a8a" stroke-width="1.1" stroke-linejoin="round"/><path d="M78 376.4L86.4 376.8L89 381.2V383H80.4L78 378.6Z" fill="#7b7b7b" stroke="#7b7b7b" stroke-width=".8" stroke-linejoin="round"/><path d="M79.6 377.4L85.7 377.7L87.6 381.1H81.4Z" fill="#e8e8e8"/><path d="M84 395H88.5V398C88.5 402.5 85.5 405 82 405H78V401.7H82C83.5 401.7 84 400.5 84 398Z" fill="#f0f0f0" stroke="#8a8a8a" stroke-width="1.1" stroke-linejoin="round"/><path d="M78 416.4L86.4 416.8L89 421.2V423H80.4L78 418.6Z" fill="#7b7b7b" stroke="#7b7b7b" stroke-width=".8" stroke-linejoin="round"/><path d="M79.6 417.4L85.7 417.7L87.6 421.1H81.4Z" fill="#e8e8e8"/><path d="M78 435H88.5V445.3H78.5V442.3H85.5V438H78Z" fill="#eee" stroke="#8a8a8a" stroke-width="1.1" stroke-linejoin="round"/><path d="M78 455H88.5V465.3H78.5V462.3H85.5V458H78Z" fill="#eee" stroke="#8a8a8a" stroke-width="1.1" stroke-linejoin="round"/><path d="M84 475H88.5V478C88.5 482.5 85.5 485 82 485H78V481.7H82C83.5 481.7 84 480.5 84 478Z" fill="#f0f0f0" stroke="#8a8a8a" stroke-width="1.1" stroke-linejoin="round"/><path d="M78 496.4L86.4 496.8L89 501.2V503H80.4L78 498.6Z" fill="#7b7b7b" stroke="#7b7b7b" stroke-width=".8" stroke-linejoin="round"/><path d="M79.6 497.4L85.7 497.7L87.6 501.1H81.4Z" fill="#e8e8e8"/><path d="M84 515H88.5V518C88.5 522.5 85.5 525 82 525H78V521.7H82C83.5 521.7 84 520.5 84 518Z" fill="#f0f0f0" stroke="#8a8a8a" stroke-width="1.1" stroke-linejoin="round"/><path d="M78 536.4L86.4 536.8L89 541.2V543H80.4L78 538.6Z" fill="#7b7b7b" stroke="#7b7b7b" stroke-width=".8" stroke-linejoin="round"/><path d="M79.6 537.4L85.7 537.7L87.6 541.1H81.4Z" fill="#e8e8e8"/><path d="M84 555H88.5V558C88.5 562.5 85.5 565 82 565H78V561.7H82C83.5 561.7 84 560.5 84 558Z" fill="#f0f0f0" stroke="#8a8a8a" stroke-width="1.1" stroke-linejoin="round"/><path d="M78 576.4L86.4 576.8L89 581.2V583H80.4L78 578.6Z" fill="#7b7b7b" stroke="#7b7b7b" stroke-width=".8" stroke-linejoin="round"/><path d="M79.6 577.4L85.7 577.7L87.6 581.1H81.4Z" fill="#e8e8e8"/><path d="M84 595H88.5V598C88.5 602.5 85.5 605 82 605H78V601.7H82C83.5 601.7 84 600.5 84 598Z" fill="#f0f0f0" stroke="#8a8a8a" stroke-width="1.1" stroke-linejoin="round"/><path d="M78 616.4L86.4 616.8L89 621.2V623H80.4L78 618.6Z" fill="#7b7b7b" stroke="#7b7b7b" stroke-width=".8" stroke-linejoin="round"/><path d="M79.6 617.4L85.7 617.7L87.6 621.1H81.4Z" fill="#e8e8e8"/><path d="M60.5 294.5H64.5V300L69 301.5V304.5L64.5 305.5L60.5 303.5Z" fill="#d8d8d8" stroke="#8a8a8a" stroke-width="1" stroke-linejoin="round"/><path d="M78 323.5V315.5H82L83 317H89L87.2 323.5Z" fill="#b4bac1" stroke="#8a9098" stroke-width="1" stroke-linejoin="round"/><path d="M78 323.5L80 318.5H89.5L87.2 323.5Z" fill="#a9b0b9" stroke="#8a9098" stroke-width=".9" stroke-linejoin="round"/><path d="M42.7 301.5L47.4 306L52.2 301.5" fill="none" stroke="#444" stroke-width=".95"/><path d="M64.3 318.7L69 323.6L64.3 328.5" fill="none" stroke="#444" stroke-width=".95"/><path d="M42.7 652.5L47.4 657L52.2 652.5M42.7 698.5L47.4 703L52.2 698.5" fill="none" stroke="#444" stroke-width=".95"/><path d="M46 764L50.7 769L46 774" fill="none" stroke="#444" stroke-width=".95"/><path d="M294.5 790.3L298 793.7L301.5 790.3" fill="none" stroke="#555" stroke-width="1"/><circle cx="252.6" cy="225.3" r="4.6" fill="none" stroke="#444" stroke-width="1.1"/><path d="M249.3 228.8L245.3 233" stroke="#444" stroke-width="1.2"/><circle cx="277.2" cy="221.3" r="1.3" fill="#333"/><circle cx="277.2" cy="227" r="1.3" fill="#333"/><circle cx="277.2" cy="232.7" r="1.3" fill="#333"/><rect x="55.5" y="253.3" width="3.4" height="3.4" fill="none" stroke="#666" stroke-width=".9"/><path d="M57.2 256.7V260H60.0" fill="none" stroke="#666" stroke-width=".9"/><rect x="60.2" y="257.5" width="5.6" height="5.3" rx=".8" fill="#ddd" stroke="#777" stroke-width=".9"/><rect x="62.1" y="259.4" width="2.6" height="2.4" fill="#9a9a9a"/><rect x="81.5" y="253.3" width="3.4" height="3.4" fill="none" stroke="#666" stroke-width=".9"/><path d="M83.2 256.7V260H86.0" fill="none" stroke="#666" stroke-width=".9"/><rect x="86.2" y="257.5" width="5.6" height="5.3" rx=".8" fill="#ddd" stroke="#777" stroke-width=".9"/><rect x="88.1" y="259.4" width="2.6" height="2.4" fill="#e0262a"/><rect x="246.3" y="253" width="2.6" height="2.6" fill="none" stroke="#555" stroke-width=".8"/><rect x="246.3" y="260.3" width="2.6" height="2.6" fill="none" stroke="#555" stroke-width=".8"/><circle cx="247.6" cy="257.9" r=".9" fill="#444"/><rect x="271" y="252" width="12.5" height="12.5" rx="1" fill="#fff" stroke="#888" stroke-width="1"/><path d="M283 252.5V264H271.5Z" fill="#444"/><path d="M15.7 222.5C15.7 220.5 13 219 13 216.3A6 6 0 0 1 25 216.3C25 219 22.3 220.5 22.3 222.5Z" fill="none" stroke="#777" stroke-width="1"/><path d="M16.3 224.3H21.7M17 226H21" stroke="#777" stroke-width="1"/><g fill="none" stroke="#666" stroke-width="1" stroke-linejoin="round"><path d="M12.3 254.3L19 251.5L25.7 254.3V261.7L19 264.8L12.3 261.7Z"/><path d="M12.3 254.3L19 257.3L25.7 254.3M19 257.3V264.8"/><ellipse cx="19" cy="251.7" rx="2.7" ry="1.3" fill="#f2f2f2"/><path d="M16.3 251.7V253.5M21.7 251.7V253.5"/></g><path d="M21.3 255.8A2.7 1.3 0 0 1 16.3 253.8" fill="none" stroke="#666" stroke-width=".9"/><g fill="none" stroke="#777" stroke-width="1"><rect x="11.5" y="328.5" width="8" height="3.2"/><rect x="17.5" y="334.5" width="9" height="3.2"/><rect x="17.5" y="340.3" width="9" height="3.2"/><path d="M14.5 331.7V342H17.5M14.5 336H17.5"/></g></svg>
<div class="t" style="left:10.5px;top:286px;font-family:'Liberation Serif',serif;font-style:italic;font-size:16px;color:#333">f</div>
<div class="t" style="left:17.5px;top:291px;font-family:'Liberation Serif',serif;font-size:9.5px;color:#555;letter-spacing:-.3px">(<i>x</i>)</div>
<div class="t" style="left:252.00px;top:247.92px;font-size:6px;"></div>
<div class="t" style="left:250.2px;top:251.6px;font-size:4.6px;font-weight:bold;color:#444;line-height:7.2px">A<br>Z</div>
<div class="t" style="left:66.40px;top:649.29px;font-size:11px;transform:scaleX(1.0309);transform-origin:0 0;color:#1a1a1a;-webkit-text-stroke:0.2px;">Measurements</div>
<div class="t" style="left:56.40px;top:672.29px;font-size:11px;transform:scaleX(0.9912);transform-origin:0 0;color:#1a1a1a;-webkit-text-stroke:0.2px;">Bend length</div>
<div class="t" style="left:192.40px;top:672.29px;font-size:11px;transform:scaleX(0.9045);transform-origin:0 0;color:#b2b2b2;">191</div>
<div class="t" style="left:66.40px;top:695.29px;font-size:11px;transform:scaleX(1.0043);transform-origin:0 0;color:#1a1a1a;-webkit-text-stroke:0.2px;">Bend properties</div>
<div class="t" style="left:56.40px;top:717.69px;font-size:11px;transform:scaleX(0.9951);transform-origin:0 0;color:#1a1a1a;-webkit-text-stroke:0.2px;">Name</div>
<div class="t" style="left:192.40px;top:717.69px;font-size:11px;transform:scaleX(0.9387);transform-origin:0 0;color:#1a1a1a;-webkit-text-stroke:0.2px;">Bend_2</div>
<div class="t" style="left:56.40px;top:740.69px;font-size:11px;transform:scaleX(0.9668);transform-origin:0 0;color:#1a1a1a;-webkit-text-stroke:0.2px;">Angle</div>
<div class="t" style="left:192.40px;top:740.69px;font-size:11px;transform:scaleX(0.9153);transform-origin:0 0;color:#b2b2b2;">90</div>
<div class="t" style="left:56.40px;top:763.69px;font-size:11px;transform:scaleX(0.9637);transform-origin:0 0;color:#1a1a1a;-webkit-text-stroke:0.2px;">Radius</div>
<div class="t" style="left:192.40px;top:763.69px;font-size:11px;color:#b2b2b2;">2</div>
<div class="t" style="left:56.40px;top:786.69px;font-size:11px;transform:scaleX(1.0232);transform-origin:0 0;color:#1a1a1a;-webkit-text-stroke:0.2px;">Neutral Surface</div>
<div class="t" style="left:193.00px;top:786.69px;font-size:11px;transform:scaleX(0.9875);transform-origin:0 0;color:#1a1a1a;-webkit-text-stroke:0.2px;">Global</div>
<!-- sec_center -->
<div class="abs" style="left:309px;top:190px;width:935px;height:18px;background:#f1f1f1;"></div>
<div class="abs" style="left:309px;top:190px;width:68px;height:18px;background:#fafafa;"></div>
<div class="abs" style="left:377px;top:190px;width:157px;height:18px;background:#dcdcdc;"></div>
<div class="abs" style="left:534px;top:190px;width:26px;height:18px;background:#fafafa;"></div>
<div class="t" style="left:320.60px;top:193.69px;font-size:11px;transform:scaleX(1.0331);transform-origin:0 0;color:#222;">Start</div>
<div class="t" style="left:388.00px;top:193.69px;font-size:11px;transform:scaleX(1.0925);transform-origin:0 0;color:#111;-webkit-text-stroke:0.25px;">patch_panel_original*</div>
<div class="abs" style="left:308px;top:208px;width:936px;height:622px;background:#ffffff;border:1px solid #6a6a6a"></div>
<div class="abs" style="left:308px;top:829px;width:936px;height:19px;background:#f2f2f2;border:1px solid #8f8f8f;border-top:1px solid #a0a0a0;border-bottom:1.5px solid #a0a0a0"></div>
<div class="abs" style="left:309px;top:830px;width:87px;height:17px;background:#fcfcfc;"></div>
<div class="abs" style="left:433px;top:830px;width:106px;height:17px;background:#fcfcfc;"></div>
<div class="abs" style="left:480px;top:830px;width:1px;height:17px;background:#e6e6e6;"></div>
<div class="abs" style="left:526px;top:830px;width:1px;height:17px;background:#e6e6e6;"></div>
<div class="abs" style="left:326px;top:830px;width:1px;height:17px;background:#d4d4d4;"></div>
<div class="abs" style="left:343px;top:830px;width:1px;height:17px;background:#d4d4d4;"></div>
<div class="abs" style="left:361px;top:830px;width:1px;height:17px;background:#d4d4d4;"></div>
<div class="abs" style="left:378px;top:830px;width:1px;height:17px;background:#d4d4d4;"></div>
<div class="abs" style="left:396px;top:830px;width:37px;height:17px;background:#dcdcdc;"></div>
<div class="t" style="left:398.60px;top:832.99px;font-size:11px;transform:scaleX(0.9882);transform-origin:0 0;color:#111;font-weight:bold;">Model</div>
<div class="t" style="left:436.40px;top:832.99px;font-size:11px;transform:scaleX(0.9503);transform-origin:0 0;color:#222;">Layout1</div>
<div class="t" style="left:483.60px;top:832.99px;font-size:11px;transform:scaleX(0.9656);transform-origin:0 0;color:#222;">Layout2</div>
<div class="t" style="left:529.00px;top:832.99px;font-size:11px;color:#222;">+</div>
<div class="abs" style="left:305px;top:849px;width:939px;height:36px;background:#e4e4e4;"></div>
<div class="abs" style="left:318px;top:851px;width:926px;height:12px;background:#d4d4d4;"></div>
<div class="abs" style="left:1226px;top:851px;width:18px;height:12px;background:#ececec;"></div>
<div class="abs" style="left:318px;top:863px;width:926px;height:22px;background:#7a858f;"></div>
<div class="t" style="left:321.00px;top:867.34px;font-size:12px;color:#e6e9ec;font-family:'Liberation Mono',monospace;">:</div>
<div class="t" style="left:334.00px;top:867.34px;font-size:12px;transform:scaleX(1.0041);transform-origin:0 0;color:#b9c0c7;font-style:italic;font-family:'Liberation Mono',monospace;">Enter command</div>
<svg style="left:0;top:0" width="1510" height="902" viewBox="0 0 1510 902"><path d="M359 194L368.7 203.7M368.7 194L359 203.7" stroke="#333" stroke-width="1"/><path d="M516.5 194L526.2 203.7M526.2 194L516.5 203.7" stroke="#333" stroke-width="1"/><path d="M542.5 199H552.5M547.5 194V204" stroke="#333" stroke-width="1"/><path d="M314 834V843.5" stroke="#111" stroke-width="1.4"/><path d="M320.6 834V843.5L315.3 838.7Z" fill="#111"/><path d="M337.3 834V843.5L332 838.7Z" fill="#111"/><path d="M349.3 834V843.5L354.6 838.7Z" fill="#111"/><path d="M366.6 834V843.5L371.9 838.7Z" fill="#111"/><path d="M373 834V843.5" stroke="#111" stroke-width="1.4"/><rect x="381.5" y="833.5" width="10" height="10" fill="#fff" stroke="#444" stroke-width="1"/><path d="M383 836.6H390M383 840.2H390" stroke="#444" stroke-width="1"/><path d="M310 853L316 859.5M316 853L310 859.5" stroke="#555" stroke-width="1"/><rect x="312.4" y="861" width="1" height="1.2" fill="#333"/><rect x="312.4" y="863.4" width="1" height="1.2" fill="#333"/><rect x="312.4" y="865.8" width="1" height="1.2" fill="#333"/><rect x="312.4" y="868.2" width="1" height="1.2" fill="#333"/><path d="M1231 854.3L1233.5 851.8L1236 854.3M1231 858L1233.5 860.5L1236 858" fill="none" stroke="#222" stroke-width="1"/></svg>
<svg style="left:309px;top:209px" width="934" height="620" viewBox="309 209 934 620">
<defs><linearGradient id="gTop" gradientUnits="userSpaceOnUse" x1="700.0" y1="354.2" x2="706.8" y2="365.9"><stop offset="0" stop-color="#f9ea7e"/><stop offset="0.32" stop-color="#f0dc7e"/><stop offset="0.55" stop-color="#c9b58c"/><stop offset="0.78" stop-color="#8d88ae"/><stop offset="1" stop-color="#575fa8"/></linearGradient><linearGradient id="gBase" gradientUnits="userSpaceOnUse" x1="700.0" y1="435.1" x2="703.8" y2="441.6"><stop offset="0" stop-color="#575fa8"/><stop offset="0.22" stop-color="#7d7aa8"/><stop offset="0.48" stop-color="#cbb98a"/><stop offset="0.7" stop-color="#f5e67c"/><stop offset="1" stop-color="#fdf283"/></linearGradient><linearGradient id="gw2" gradientUnits="userSpaceOnUse" x1="627.2" y1="0.0" x2="675.2" y2="0.0"><stop offset="0" stop-color="#6f73c2"/><stop offset="0.3" stop-color="#a9a8b8"/><stop offset="0.55" stop-color="#e3da86"/><stop offset="1" stop-color="#f6ec6e"/></linearGradient><clipPath id="hc1"><path d="M627.2 519.0A24.0 13.9 0 1 1 675.2 519.0A24.0 13.9 0 1 1 627.2 519.0Z"/></clipPath><linearGradient id="gw4" gradientUnits="userSpaceOnUse" x1="569.1" y1="0.0" x2="617.2" y2="0.0"><stop offset="0" stop-color="#6f73c2"/><stop offset="0.3" stop-color="#a9a8b8"/><stop offset="0.55" stop-color="#e3da86"/><stop offset="1" stop-color="#f6ec6e"/></linearGradient><clipPath id="hc2"><path d="M569.1 552.5A24.0 13.9 0 1 1 617.2 552.5A24.0 13.9 0 1 1 569.1 552.5Z"/></clipPath><linearGradient id="gw6" gradientUnits="userSpaceOnUse" x1="693.3" y1="0.0" x2="741.3" y2="0.0"><stop offset="0" stop-color="#6f73c2"/><stop offset="0.3" stop-color="#a9a8b8"/><stop offset="0.55" stop-color="#e3da86"/><stop offset="1" stop-color="#f6ec6e"/></linearGradient><clipPath id="hc3"><path d="M693.3 557.2A24.0 13.9 0 1 1 741.3 557.2A24.0 13.9 0 1 1 693.3 557.2Z"/></clipPath><linearGradient id="gw8" gradientUnits="userSpaceOnUse" x1="635.3" y1="0.0" x2="683.3" y2="0.0"><stop offset="0" stop-color="#6f73c2"/><stop offset="0.3" stop-color="#a9a8b8"/><stop offset="0.55" stop-color="#e3da86"/><stop offset="1" stop-color="#f6ec6e"/></linearGradient><clipPath id="hc4"><path d="M635.3 590.8A24.0 13.9 0 1 1 683.3 590.8A24.0 13.9 0 1 1 635.3 590.8Z"/></clipPath><linearGradient id="gw10" gradientUnits="userSpaceOnUse" x1="917.5" y1="0.0" x2="956.9" y2="0.0"><stop offset="0" stop-color="#6f73c2"/><stop offset="0.3" stop-color="#a9a8b8"/><stop offset="0.55" stop-color="#e3da86"/><stop offset="1" stop-color="#f6ec6e"/></linearGradient><clipPath id="hc5"><path d="M917.5 354.0A19.7 11.4 0 1 1 956.9 354.0A19.7 11.4 0 1 1 917.5 354.0Z"/></clipPath><linearGradient id="gw12" gradientUnits="userSpaceOnUse" x1="983.5" y1="0.0" x2="1023.4" y2="0.0"><stop offset="0" stop-color="#6f73c2"/><stop offset="0.3" stop-color="#a9a8b8"/><stop offset="0.55" stop-color="#e3da86"/><stop offset="1" stop-color="#f6ec6e"/></linearGradient><clipPath id="hc6"><path d="M983.5 392.5A20.0 11.5 0 1 1 1023.4 392.5A20.0 11.5 0 1 1 983.5 392.5Z"/></clipPath><linearGradient id="gw14" gradientUnits="userSpaceOnUse" x1="879.3" y1="0.0" x2="895.5" y2="0.0"><stop offset="0" stop-color="#6f73c2"/><stop offset="0.3" stop-color="#a9a8b8"/><stop offset="0.55" stop-color="#e3da86"/><stop offset="1" stop-color="#f6ec6e"/></linearGradient><clipPath id="hc7"><path d="M879.3 383.1A8.1 4.7 0 1 1 895.5 383.1A8.1 4.7 0 1 1 879.3 383.1Z"/></clipPath><linearGradient id="gw16" gradientUnits="userSpaceOnUse" x1="945.4" y1="0.0" x2="961.6" y2="0.0"><stop offset="0" stop-color="#6f73c2"/><stop offset="0.3" stop-color="#a9a8b8"/><stop offset="0.55" stop-color="#e3da86"/><stop offset="1" stop-color="#f6ec6e"/></linearGradient><clipPath id="hc8"><path d="M945.4 421.3A8.1 4.7 0 1 1 961.6 421.3A8.1 4.7 0 1 1 945.4 421.3Z"/></clipPath><linearGradient id="gs18" gradientUnits="userSpaceOnUse" x1="699.8" y1="0.0" x2="757.0" y2="0.0"><stop offset="0" stop-color="#8a8dcb"/><stop offset="0.72" stop-color="#9a9acb"/><stop offset="0.86" stop-color="#e9df78"/><stop offset="1" stop-color="#f6ec6e"/></linearGradient><clipPath id="hc9"><path d="M703.1 484.1L701.4 483.3L700.3 482.5L699.8 481.6L700.0 480.7L700.8 479.8L702.2 478.8L739.0 457.5L740.7 456.7L742.3 456.3L743.9 456.2L745.4 456.5L746.8 457.1L748.2 458.1L755.3 464.3L756.4 465.4L757.0 466.6L757.0 467.7L756.6 468.7L755.6 469.8L754.1 470.8L725.1 487.5L723.4 488.4L721.6 489.0L719.7 489.2L717.8 489.2L715.8 488.8L713.8 488.2Z"/></clipPath><linearGradient id="gs20" gradientUnits="userSpaceOnUse" x1="791.1" y1="0.0" x2="831.9" y2="0.0"><stop offset="0" stop-color="#8a8dcb"/><stop offset="0.72" stop-color="#9a9acb"/><stop offset="0.86" stop-color="#e9df78"/><stop offset="1" stop-color="#f6ec6e"/></linearGradient><clipPath id="hc10"><path d="M794.3 431.5L792.6 430.7L791.6 429.8L791.1 428.9L791.3 428.0L792.1 427.0L793.5 426.0L813.9 414.3L815.6 413.5L817.2 413.0L818.8 412.9L820.4 413.2L821.8 413.8L823.2 414.8L830.1 420.6L831.2 421.7L831.8 422.8L831.9 423.9L831.5 425.0L830.5 426.0L829.0 427.0L815.2 435.0L813.4 435.9L811.6 436.4L809.8 436.7L807.9 436.6L806.0 436.2L804.0 435.6Z"/></clipPath><linearGradient id="gs22" gradientUnits="userSpaceOnUse" x1="766.2" y1="0.0" x2="873.1" y2="0.0"><stop offset="0" stop-color="#8a8dcb"/><stop offset="0.72" stop-color="#9a9acb"/><stop offset="0.86" stop-color="#e9df78"/><stop offset="1" stop-color="#f6ec6e"/></linearGradient><clipPath id="hc11"><path d="M769.5 522.6L767.7 521.7L766.7 520.9L766.2 520.0L766.4 519.1L767.2 518.1L768.6 517.1L856.1 466.6L857.8 465.8L859.4 465.4L860.9 465.3L862.4 465.6L863.7 466.3L865.0 467.3L871.5 473.6L872.5 474.8L873.0 476.0L873.1 477.1L872.6 478.2L871.6 479.2L870.1 480.2L790.9 526.0L789.1 526.8L787.3 527.4L785.4 527.6L783.5 527.6L781.6 527.2L779.6 526.6Z"/></clipPath><linearGradient id="gFront" gradientUnits="userSpaceOnUse" x1="870.0" y1="520.3" x2="876.4" y2="531.4"><stop offset="0" stop-color="#f9e97e"/><stop offset="0.3" stop-color="#efdc80"/><stop offset="0.55" stop-color="#c6b390"/><stop offset="0.8" stop-color="#8784b2"/><stop offset="1" stop-color="#4f5aa7"/></linearGradient><linearGradient id="gLeft" gradientUnits="userSpaceOnUse" x1="590.0" y1="590.0" x2="583.5" y2="601.5"><stop offset="0" stop-color="#fdf283"/><stop offset="0.65" stop-color="#fbee7e"/><stop offset="1" stop-color="#ddcf7a"/></linearGradient><linearGradient id="gV" gradientUnits="userSpaceOnUse" x1="501.2" y1="0.0" x2="508.7" y2="0.0"><stop offset="0" stop-color="#8d8ab8"/><stop offset="0.4" stop-color="#c9bb9c"/><stop offset="0.75" stop-color="#f1e48c"/><stop offset="1" stop-color="#f5e98c"/></linearGradient><linearGradient id="gEar" gradientUnits="userSpaceOnUse" x1="484.0" y1="680.0" x2="487.3" y2="687.0"><stop offset="0" stop-color="#575fa8"/><stop offset="0.35" stop-color="#8583b4"/><stop offset="0.7" stop-color="#e0d084"/><stop offset="1" stop-color="#f6ea7c"/></linearGradient><clipPath id="earslot"><rect x="480.6" y="588.6" width="8.6" height="78" rx="4.3"/></clipPath></defs>
<polygon points="928.6,308.0 962.8,288.2 965.6,290.5 965.6,334.0 931.3,314.0" fill="#575fa8" stroke="#20221c" stroke-width="0.9" stroke-linejoin="round" />
<polygon points="928.4,306.4 962.6,286.4 965.6,289.6 931.6,309.3" fill="#f6ea55" stroke="#20221c" stroke-width="0.9" stroke-linejoin="round" />
<polygon points="928.4,306.4 931.6,309.3 931.6,313.0 928.4,311.0" fill="#8fd0a0" stroke="#20221c" stroke-width="0.6" stroke-linejoin="round" />
<polygon points="512.5,546.8 920.6,310.0 1076.5,400.5 670.0,636.0" fill="#b5bfa1" stroke="#20221c" stroke-width="0.9" stroke-linejoin="round" />
<polygon points="926.0,312.6 1077.3,399.6 1076.5,401.3 924.2,313.6" fill="#e2cf7a" stroke="#20221c" stroke-width="0.5" stroke-linejoin="round" />
<path d="M920.6 310L1078 399.8" stroke="#20221c" stroke-width="1.2" fill="none"/>
<path d="M545 429.2L844.6 252.5L860.5 252.4Q867.5 253 869.3 258L866 258.6L553 439L545.9 438L545 434.5Z" fill="#9dc1a3" stroke="#20221c" stroke-width="0.9" stroke-linejoin="round" />
<path d="M553 439L866 258.6L869.3 258Q873.5 262 874.6 271.6L558.3 449.8Z" fill="url(#gTop)" stroke="#20221c" stroke-width="0.8" stroke-linejoin="round" />
<polygon points="558.3,449.8 874.6,271.6 874.9,335.6 558.3,516.2" fill="#575fa8" stroke="#20221c" stroke-width="0.9" stroke-linejoin="round" />
<polygon points="558.3,516.2 874.9,335.6 880.0,340.0 561.9,523.4" fill="url(#gBase)" stroke="#20221c" stroke-width="0.8" stroke-linejoin="round" />
<path d="M545 429.2L545 434.5L545.9 438L551.5 440.5Q553.8 443 553.6 449L553.4 511Q553.6 518.5 558 521.5L561.9 523.4L563 521.5Q558.5 518.5 558.3 513L558.3 449.8Q558 443.5 553 439L546.5 437Z" fill="#9dc1a3" stroke="#20221c" stroke-width="0.8" stroke-linejoin="round" />
<path d="M627.2 519.0A24.0 13.9 0 1 1 675.2 519.0A24.0 13.9 0 1 1 627.2 519.0Z" fill="url(#gw2)"/>
<g clip-path="url(#hc1)"><path d="M627.2 519.0A24.0 13.9 0 1 1 675.2 519.0A24.0 13.9 0 1 1 627.2 519.0Z" transform="translate(0 3.8)" fill="#ffffff" stroke="#20221c" stroke-width=".7"/></g>
<path d="M627.2 519.0A24.0 13.9 0 1 1 675.2 519.0A24.0 13.9 0 1 1 627.2 519.0Z" fill="none" stroke="#20221c" stroke-width="1"/>
<path d="M569.1 552.5A24.0 13.9 0 1 1 617.2 552.5A24.0 13.9 0 1 1 569.1 552.5Z" fill="url(#gw4)"/>
<g clip-path="url(#hc2)"><path d="M569.1 552.5A24.0 13.9 0 1 1 617.2 552.5A24.0 13.9 0 1 1 569.1 552.5Z" transform="translate(0 3.8)" fill="#ffffff" stroke="#20221c" stroke-width=".7"/></g>
<path d="M569.1 552.5A24.0 13.9 0 1 1 617.2 552.5A24.0 13.9 0 1 1 569.1 552.5Z" fill="none" stroke="#20221c" stroke-width="1"/>
<path d="M693.3 557.2A24.0 13.9 0 1 1 741.3 557.2A24.0 13.9 0 1 1 693.3 557.2Z" fill="url(#gw6)"/>
<g clip-path="url(#hc3)"><path d="M693.3 557.2A24.0 13.9 0 1 1 741.3 557.2A24.0 13.9 0 1 1 693.3 557.2Z" transform="translate(0 3.8)" fill="#ffffff" stroke="#20221c" stroke-width=".7"/></g>
<path d="M693.3 557.2A24.0 13.9 0 1 1 741.3 557.2A24.0 13.9 0 1 1 693.3 557.2Z" fill="none" stroke="#20221c" stroke-width="1"/>
<path d="M635.3 590.8A24.0 13.9 0 1 1 683.3 590.8A24.0 13.9 0 1 1 635.3 590.8Z" fill="url(#gw8)"/>
<g clip-path="url(#hc4)"><path d="M635.3 590.8A24.0 13.9 0 1 1 683.3 590.8A24.0 13.9 0 1 1 635.3 590.8Z" transform="translate(0 3.8)" fill="#ffffff" stroke="#20221c" stroke-width=".7"/></g>
<path d="M635.3 590.8A24.0 13.9 0 1 1 683.3 590.8A24.0 13.9 0 1 1 635.3 590.8Z" fill="none" stroke="#20221c" stroke-width="1"/>
<ellipse cx="629.0" cy="505.7" rx="2.8" ry="1.8" fill="#c3cc9e" stroke="#20221c" stroke-width=".8"/>
<path d="M627.2 504.8A2.8 1.8 0 0 1 631.4 505.5" fill="none" stroke="#e6de7c" stroke-width=".9"/>
<ellipse cx="673.5" cy="531.9" rx="2.8" ry="1.8" fill="#c3cc9e" stroke="#20221c" stroke-width=".8"/>
<path d="M671.7 531.0A2.8 1.8 0 0 1 675.9 531.7" fill="none" stroke="#e6de7c" stroke-width=".9"/>
<ellipse cx="570.6" cy="539.4" rx="2.8" ry="1.8" fill="#c3cc9e" stroke="#20221c" stroke-width=".8"/>
<path d="M568.8 538.5A2.8 1.8 0 0 1 573.0 539.2" fill="none" stroke="#e6de7c" stroke-width=".9"/>
<ellipse cx="615.5" cy="564.8" rx="2.8" ry="1.8" fill="#c3cc9e" stroke="#20221c" stroke-width=".8"/>
<path d="M613.7 563.9A2.8 1.8 0 0 1 617.9 564.6" fill="none" stroke="#e6de7c" stroke-width=".9"/>
<ellipse cx="694.7" cy="543.6" rx="2.8" ry="1.8" fill="#c3cc9e" stroke="#20221c" stroke-width=".8"/>
<path d="M692.9 542.7A2.8 1.8 0 0 1 697.1 543.4" fill="none" stroke="#e6de7c" stroke-width=".9"/>
<ellipse cx="740.4" cy="569.8" rx="2.8" ry="1.8" fill="#c3cc9e" stroke="#20221c" stroke-width=".8"/>
<path d="M738.6 568.9A2.8 1.8 0 0 1 742.8 569.6" fill="none" stroke="#e6de7c" stroke-width=".9"/>
<ellipse cx="637.3" cy="577.3" rx="2.8" ry="1.8" fill="#c3cc9e" stroke="#20221c" stroke-width=".8"/>
<path d="M635.5 576.4A2.8 1.8 0 0 1 639.7 577.1" fill="none" stroke="#e6de7c" stroke-width=".9"/>
<ellipse cx="681.7" cy="603.5" rx="2.8" ry="1.8" fill="#c3cc9e" stroke="#20221c" stroke-width=".8"/>
<path d="M679.9 602.6A2.8 1.8 0 0 1 684.1 603.3" fill="none" stroke="#e6de7c" stroke-width=".9"/>
<path d="M917.5 354.0A19.7 11.4 0 1 1 956.9 354.0A19.7 11.4 0 1 1 917.5 354.0Z" fill="url(#gw10)"/>
<g clip-path="url(#hc5)"><path d="M917.5 354.0A19.7 11.4 0 1 1 956.9 354.0A19.7 11.4 0 1 1 917.5 354.0Z" transform="translate(0 3.2)" fill="#a7b0aa" stroke="#20221c" stroke-width=".7"/></g>
<path d="M917.5 354.0A19.7 11.4 0 1 1 956.9 354.0A19.7 11.4 0 1 1 917.5 354.0Z" fill="none" stroke="#20221c" stroke-width="1"/>
<g clip-path="url(#hc5)"><path d="M916.5 342.6H923.9V367.4H916.5Z" transform="translate(0 3.2)" fill="#fff" clip-path="url(#hc5)"/><rect x="923.9" y="348.0" width="3.4" height="18" fill="#e1d17c"/><path d="M923.9 347.0V366.0M927.3 347.0V366.0" stroke="#20221c" stroke-width=".6"/></g>
<path d="M917.5 354.0A19.7 11.4 0 1 1 956.9 354.0A19.7 11.4 0 1 1 917.5 354.0Z" fill="none" stroke="#20221c" stroke-width="1"/>
<path d="M983.5 392.5A20.0 11.5 0 1 1 1023.4 392.5A20.0 11.5 0 1 1 983.5 392.5Z" fill="url(#gw12)"/>
<g clip-path="url(#hc6)"><path d="M983.5 392.5A20.0 11.5 0 1 1 1023.4 392.5A20.0 11.5 0 1 1 983.5 392.5Z" transform="translate(0 3.2)" fill="#a3aca6" stroke="#20221c" stroke-width=".7"/></g>
<path d="M983.5 392.5A20.0 11.5 0 1 1 1023.4 392.5A20.0 11.5 0 1 1 983.5 392.5Z" fill="none" stroke="#20221c" stroke-width="1"/>
<g clip-path="url(#hc6)"><path d="M1007.0 403.8L1021.5 393.8L1027.5 395.5L1013.5 409.5Z" fill="#fff" stroke="#20221c" stroke-width=".6"/></g>
<path d="M983.5 392.5A20.0 11.5 0 1 1 1023.4 392.5A20.0 11.5 0 1 1 983.5 392.5Z" fill="none" stroke="#20221c" stroke-width="1"/>
<path d="M879.3 383.1A8.1 4.7 0 1 1 895.5 383.1A8.1 4.7 0 1 1 879.3 383.1Z" fill="url(#gw14)"/>
<g clip-path="url(#hc7)"><path d="M879.3 383.1A8.1 4.7 0 1 1 895.5 383.1A8.1 4.7 0 1 1 879.3 383.1Z" transform="translate(0 2.6)" fill="#ffffff" stroke="#20221c" stroke-width=".7"/></g>
<path d="M879.3 383.1A8.1 4.7 0 1 1 895.5 383.1A8.1 4.7 0 1 1 879.3 383.1Z" fill="none" stroke="#20221c" stroke-width="1"/>
<path d="M945.4 421.3A8.1 4.7 0 1 1 961.6 421.3A8.1 4.7 0 1 1 945.4 421.3Z" fill="url(#gw16)"/>
<g clip-path="url(#hc8)"><path d="M945.4 421.3A8.1 4.7 0 1 1 961.6 421.3A8.1 4.7 0 1 1 945.4 421.3Z" transform="translate(0 2.6)" fill="#aab3a9" stroke="#20221c" stroke-width=".7"/></g>
<path d="M945.4 421.3A8.1 4.7 0 1 1 961.6 421.3A8.1 4.7 0 1 1 945.4 421.3Z" fill="none" stroke="#20221c" stroke-width="1"/>
<path d="M703.1 484.1L701.4 483.3L700.3 482.5L699.8 481.6L700.0 480.7L700.8 479.8L702.2 478.8L739.0 457.5L740.7 456.7L742.3 456.3L743.9 456.2L745.4 456.5L746.8 457.1L748.2 458.1L755.3 464.3L756.4 465.4L757.0 466.6L757.0 467.7L756.6 468.7L755.6 469.8L754.1 470.8L725.1 487.5L723.4 488.4L721.6 489.0L719.7 489.2L717.8 489.2L715.8 488.8L713.8 488.2Z" fill="url(#gs18)"/>
<g clip-path="url(#hc9)"><path d="M703.1 484.1L701.4 483.3L700.3 482.5L699.8 481.6L700.0 480.7L700.8 479.8L702.2 478.8L739.0 457.5L740.7 456.7L742.3 456.3L743.9 456.2L745.4 456.5L746.8 457.1L748.2 458.1L755.3 464.3L756.4 465.4L757.0 466.6L757.0 467.7L756.6 468.7L755.6 469.8L754.1 470.8L725.1 487.5L723.4 488.4L721.6 489.0L719.7 489.2L717.8 489.2L715.8 488.8L713.8 488.2Z" transform="translate(0 3.9)" fill="#ffffff" stroke="#20221c" stroke-width=".7"/></g>
<path d="M703.1 484.1L701.4 483.3L700.3 482.5L699.8 481.6L700.0 480.7L700.8 479.8L702.2 478.8L739.0 457.5L740.7 456.7L742.3 456.3L743.9 456.2L745.4 456.5L746.8 457.1L748.2 458.1L755.3 464.3L756.4 465.4L757.0 466.6L757.0 467.7L756.6 468.7L755.6 469.8L754.1 470.8L725.1 487.5L723.4 488.4L721.6 489.0L719.7 489.2L717.8 489.2L715.8 488.8L713.8 488.2Z" fill="none" stroke="#20221c" stroke-width="1"/>
<path d="M794.3 431.5L792.6 430.7L791.6 429.8L791.1 428.9L791.3 428.0L792.1 427.0L793.5 426.0L813.9 414.3L815.6 413.5L817.2 413.0L818.8 412.9L820.4 413.2L821.8 413.8L823.2 414.8L830.1 420.6L831.2 421.7L831.8 422.8L831.9 423.9L831.5 425.0L830.5 426.0L829.0 427.0L815.2 435.0L813.4 435.9L811.6 436.4L809.8 436.7L807.9 436.6L806.0 436.2L804.0 435.6Z" fill="url(#gs20)"/>
<g clip-path="url(#hc10)"><path d="M794.3 431.5L792.6 430.7L791.6 429.8L791.1 428.9L791.3 428.0L792.1 427.0L793.5 426.0L813.9 414.3L815.6 413.5L817.2 413.0L818.8 412.9L820.4 413.2L821.8 413.8L823.2 414.8L830.1 420.6L831.2 421.7L831.8 422.8L831.9 423.9L831.5 425.0L830.5 426.0L829.0 427.0L815.2 435.0L813.4 435.9L811.6 436.4L809.8 436.7L807.9 436.6L806.0 436.2L804.0 435.6Z" transform="translate(0 3.9)" fill="#ffffff" stroke="#20221c" stroke-width=".7"/></g>
<path d="M794.3 431.5L792.6 430.7L791.6 429.8L791.1 428.9L791.3 428.0L792.1 427.0L793.5 426.0L813.9 414.3L815.6 413.5L817.2 413.0L818.8 412.9L820.4 413.2L821.8 413.8L823.2 414.8L830.1 420.6L831.2 421.7L831.8 422.8L831.9 423.9L831.5 425.0L830.5 426.0L829.0 427.0L815.2 435.0L813.4 435.9L811.6 436.4L809.8 436.7L807.9 436.6L806.0 436.2L804.0 435.6Z" fill="none" stroke="#20221c" stroke-width="1"/>
<path d="M769.5 522.6L767.7 521.7L766.7 520.9L766.2 520.0L766.4 519.1L767.2 518.1L768.6 517.1L856.1 466.6L857.8 465.8L859.4 465.4L860.9 465.3L862.4 465.6L863.7 466.3L865.0 467.3L871.5 473.6L872.5 474.8L873.0 476.0L873.1 477.1L872.6 478.2L871.6 479.2L870.1 480.2L790.9 526.0L789.1 526.8L787.3 527.4L785.4 527.6L783.5 527.6L781.6 527.2L779.6 526.6Z" fill="url(#gs22)"/>
<g clip-path="url(#hc11)"><path d="M769.5 522.6L767.7 521.7L766.7 520.9L766.2 520.0L766.4 519.1L767.2 518.1L768.6 517.1L856.1 466.6L857.8 465.8L859.4 465.4L860.9 465.3L862.4 465.6L863.7 466.3L865.0 467.3L871.5 473.6L872.5 474.8L873.0 476.0L873.1 477.1L872.6 478.2L871.6 479.2L870.1 480.2L790.9 526.0L789.1 526.8L787.3 527.4L785.4 527.6L783.5 527.6L781.6 527.2L779.6 526.6Z" transform="translate(0 3.9)" fill="#ffffff" stroke="#20221c" stroke-width=".7"/></g>
<path d="M769.5 522.6L767.7 521.7L766.7 520.9L766.2 520.0L766.4 519.1L767.2 518.1L768.6 517.1L856.1 466.6L857.8 465.8L859.4 465.4L860.9 465.3L862.4 465.6L863.7 466.3L865.0 467.3L871.5 473.6L872.5 474.8L873.0 476.0L873.1 477.1L872.6 478.2L871.6 479.2L870.1 480.2L790.9 526.0L789.1 526.8L787.3 527.4L785.4 527.6L783.5 527.6L781.6 527.2L779.6 526.6Z" fill="none" stroke="#20221c" stroke-width="1"/>
<ellipse cx="757.1" cy="457.9" rx="2.8" ry="1.8" fill="#c3cc9e" stroke="#20221c" stroke-width=".8"/>
<path d="M755.3 457.0A2.8 1.8 0 0 1 759.5 457.7" fill="none" stroke="#e6de7c" stroke-width=".9"/>
<ellipse cx="701.7" cy="489.9" rx="2.8" ry="1.8" fill="#c3cc9e" stroke="#20221c" stroke-width=".8"/>
<path d="M699.9 489.0A2.8 1.8 0 0 1 704.1 489.7" fill="none" stroke="#e6de7c" stroke-width=".9"/>
<ellipse cx="833.0" cy="414.0" rx="2.8" ry="1.8" fill="#c3cc9e" stroke="#20221c" stroke-width=".8"/>
<path d="M831.2 413.1A2.8 1.8 0 0 1 835.4 413.8" fill="none" stroke="#e6de7c" stroke-width=".9"/>
<ellipse cx="791.3" cy="438.2" rx="2.8" ry="1.8" fill="#c3cc9e" stroke="#20221c" stroke-width=".8"/>
<path d="M789.5 437.3A2.8 1.8 0 0 1 793.7 438.0" fill="none" stroke="#e6de7c" stroke-width=".9"/>
<ellipse cx="873.6" cy="467.3" rx="2.8" ry="1.8" fill="#c3cc9e" stroke="#20221c" stroke-width=".8"/>
<path d="M871.8 466.4A2.8 1.8 0 0 1 876.0 467.1" fill="none" stroke="#e6de7c" stroke-width=".9"/>
<ellipse cx="768.1" cy="528.3" rx="2.8" ry="1.8" fill="#c3cc9e" stroke="#20221c" stroke-width=".8"/>
<path d="M766.3 527.4A2.8 1.8 0 0 1 770.5 528.1" fill="none" stroke="#e6de7c" stroke-width=".9"/>
<path d="M670 636L1076.5 400.5L1082 400.2L1086.5 406.5L1086.5 429.5L671 671L671 647Z" fill="url(#gFront)" stroke="#20221c" stroke-width="0.9" stroke-linejoin="round" />
<path d="M672 648.5L1086 409.3" stroke="#20221c" stroke-width=".6" opacity=".55" fill="none"/>
<polygon points="671.0,667.8 1086.5,426.3 1086.5,429.5 671.0,671.0" fill="#5f63bd" stroke="#20221c" stroke-width="0.8" stroke-linejoin="round" />
<path d="M1076.5 400.5L1081 399.8L1083.5 402.5L1084 411L1080 409Z" fill="#3f6fc4" stroke="#20221c" stroke-width="0.7" stroke-linejoin="round" />
<path d="M1084 404L1086.6 406.5V414L1083.8 412Z" fill="#86cf8a" stroke="#20221c" stroke-width="0.6" stroke-linejoin="round" />
<polygon points="512.5,547.0 670.0,636.0 671.0,647.4 663.5,648.5 508.5,560.3 509.0,551.0" fill="url(#gLeft)" stroke="#20221c" stroke-width="0.9" stroke-linejoin="round" />
<polygon points="511.0,546.5 513.2,548.0 510.0,551.2 508.7,549.5" fill="#9fd0a5" stroke="#20221c" stroke-width="0.6" stroke-linejoin="round" />
<polygon points="508.7,560.5 663.5,648.5 663.5,659.8 657.2,664.8 602.3,634.9 526.4,684.9 526.4,686.6 508.7,678.0" fill="#8ba6a1" stroke="#20221c" stroke-width="0.9" stroke-linejoin="round" />
<path d="M663.5 648.5L671 647.4V671L668.5 672.4L657.2 666L663.5 661Z" fill="#eadd78" stroke="#20221c" stroke-width="0.8" stroke-linejoin="round" />
<path d="M665 649.5H668.6V664.3L665 662.3Z" fill="#b9b8d6" stroke="#20221c" stroke-width="0.5" stroke-linejoin="round" />
<polygon points="501.2,557.6 503.5,556.0 508.7,559.0 508.7,676.0 503.0,679.3 501.2,672.5" fill="url(#gV)" stroke="#20221c" stroke-width="0.8" stroke-linejoin="round" />
<path d="M502.3 557L504 555.3Q506.5 555.5 508.7 559" fill="#a6d4ad" stroke="#20221c" stroke-width=".6"/>
<ellipse cx="505.2" cy="674" rx="2.6" ry="3" fill="#fff" stroke="#20221c" stroke-width=".6"/>
<polygon points="465.0,575.0 498.7,555.2 501.2,557.6 501.2,672.5 471.0,693.5 465.0,690.0" fill="#575fa8" stroke="#20221c" stroke-width="0.9" stroke-linejoin="round" />
<path d="M465 575L498.7 555.2L501.2 557.6L467.6 577.4V689.5L465 691.5Z" fill="#f3e85c" stroke="#20221c" stroke-width="0.8" stroke-linejoin="round" />
<polygon points="467.6,689.5 501.2,669.5 505.0,677.3 471.2,696.3" fill="url(#gEar)" stroke="#20221c" stroke-width="0.7" stroke-linejoin="round" />
<path d="M465 691.5Q466 699.5 480 705.6L497.4 705.6L526 689.8V686L505 677.3L471.2 696.3Z" fill="#b5bfa1" stroke="#20221c" stroke-width="0.8" stroke-linejoin="round" />
<polygon points="497.4,702.2 526.0,686.4 526.0,689.8 497.4,705.6" fill="#9b9bcc" stroke="#20221c" stroke-width="0.7" stroke-linejoin="round" />
<path d="M465 690.5Q466 699.8 480 705.8L497.4 705.8V703.4L481 703.2Q469.5 698 468 692Z" fill="#f1e56a" stroke="#20221c" stroke-width="0.7" stroke-linejoin="round" />
<rect x="480.6" y="588.6" width="8.6" height="78" rx="4.3" fill="#f1e85a"/>
<g clip-path="url(#earslot)"><path d="M481 593.5Q481 589.6 483.6 589.6Q486.2 589.6 486.2 593.5V658.5Q485.5 662 481 664.5Z" fill="#fff" stroke="#20221c" stroke-width=".6"/></g>
<rect x="480.6" y="588.6" width="8.6" height="78" rx="4.3" fill="none" stroke="#20221c" stroke-width=".9"/>
<path d="M667.2 647.2L704 626.3" stroke="#d9707a" stroke-width="2" opacity=".85"/><path d="M711 622.4L700.5 623.4L704.6 630.6Z" fill="#cf6068" opacity=".85"/>
<path d="M667.2 647.2L632 627.8" stroke="#1a9a48" stroke-width="2.3"/><path d="M625 624L635.5 624.5L631.5 631.8Z" fill="#12843a"/>
<path d="M667.2 647.2V607" stroke="#1a6fd0" stroke-width="2.2"/><path d="M667.2 599.5L663.4 609H671Z" fill="#1a6fd0"/>
<path d="M664.2 645.5Q667.2 638.5 670.4 645.5" fill="none" stroke="#e9eef8" stroke-width=".9"/>
<text x="661.8" y="598" font-family="Liberation Sans, sans-serif" font-size="13.5" fill="#4da0ee">Z</text><text x="615.5" y="625.5" font-family="Liberation Sans, sans-serif" font-size="12.5" fill="#5ccf84">Y</text><text x="710.5" y="627" font-family="Liberation Sans, sans-serif" font-size="12.5" fill="#e58f96">X</text>
<circle cx="1209.5" cy="242" r="25.3" fill="#fcfcfc" stroke="#e2e2e2" stroke-width="1"/>
<path d="M0 1.7L1.6 -1.2H-1.6Z" transform="translate(1209.5 221.3) rotate(0)" fill="#c2c2c2"/>
<path d="M0 1.7L1.6 -1.2H-1.6Z" transform="translate(1224.1 227.4) rotate(45)" fill="#c2c2c2"/>
<path d="M0 1.7L1.6 -1.2H-1.6Z" transform="translate(1230.2 242.0) rotate(90)" fill="#c2c2c2"/>
<path d="M0 1.7L1.6 -1.2H-1.6Z" transform="translate(1224.1 256.6) rotate(135)" fill="#c2c2c2"/>
<path d="M0 1.7L1.6 -1.2H-1.6Z" transform="translate(1209.5 262.7) rotate(180)" fill="#c2c2c2"/>
<path d="M0 1.7L1.6 -1.2H-1.6Z" transform="translate(1194.9 256.6) rotate(225)" fill="#c2c2c2"/>
<path d="M0 1.7L1.6 -1.2H-1.6Z" transform="translate(1188.8 242.0) rotate(270)" fill="#c2c2c2"/>
<path d="M0 1.7L1.6 -1.2H-1.6Z" transform="translate(1194.9 227.4) rotate(315)" fill="#c2c2c2"/>
<path d="M316.7 555.8V604" stroke="#4da3ff" stroke-width="1.1"/><path d="M309 592.6L345 572.3" stroke="#ffb0b0" stroke-width="1"/><path d="M309 583.2L331.1 595.9" stroke="#5cd68c" stroke-width="1"/><rect x="312.4" y="584.2" width="8.5" height="8.4" fill="none" stroke="#333" stroke-width="1.1"/>
</svg>
<!-- sec_right -->
<div class="abs" style="left:1247px;top:199px;width:226px;height:686px;background:#f2f2f2;"></div>
<div class="abs" style="left:1473px;top:199px;width:37px;height:686px;background:#dcdcdc;"></div>
<div class="abs" style="left:1473px;top:199px;width:37px;height:38px;background:#f2f2f2;"></div>
<div class="abs" style="left:1250px;top:202px;width:186px;height:21px;background:#ffffff;border:1px solid #d0d0d0"></div>
<div class="t" style="left:1253.60px;top:207.29px;font-size:11px;transform:scaleX(0.9363);transform-origin:0 0;color:#111;">No Selection</div>
<div class="abs" style="left:1454px;top:204px;width:16px;height:15px;background:#a8d0fb;"></div>
<div class="abs" style="left:1262px;top:226px;width:211px;height:17.6px;background:#cdcdcd;"></div>
<div class="t" style="left:1264.60px;top:229.29px;font-size:11px;transform:scaleX(1.0253);transform-origin:0 0;color:#000;font-weight:bold;">General</div>
<div class="abs" style="left:1262px;top:243.6px;width:211px;height:17px;background:#cdcdcd;"></div>
<div class="t" style="left:1264.60px;top:246.89px;font-size:11px;transform:scaleX(1.0455);transform-origin:0 0;color:#000;font-weight:bold;">View</div>
<div class="abs" style="left:1262px;top:451px;width:211px;height:17.4px;background:#cdcdcd;"></div>
<div class="t" style="left:1264.60px;top:454.29px;font-size:11px;transform:scaleX(0.9569);transform-origin:0 0;color:#000;font-weight:bold;">Misc</div>
<div class="abs" style="left:1262px;top:260.6px;width:211px;height:1px;background:#dcdcdc;"></div>
<div class="abs" style="left:1262px;top:261.6px;width:211px;height:1px;background:#fafafa;"></div>
<div class="t" style="left:1265.00px;top:264.09px;font-size:11px;transform:scaleX(0.9201);transform-origin:0 0;color:#111;">Camera</div>
<div class="t" style="left:1360.40px;top:264.09px;font-size:11px;transform:scaleX(1.0026);transform-origin:0 0;color:#111;">10, 173, -126</div>
<div class="abs" style="left:1262px;top:277.9px;width:211px;height:1px;background:#dcdcdc;"></div>
<div class="abs" style="left:1262px;top:278.9px;width:211px;height:1px;background:#fafafa;"></div>
<div class="t" style="left:1265.00px;top:281.43px;font-size:11px;transform:scaleX(1.0009);transform-origin:0 0;color:#111;">Target</div>
<div class="t" style="left:1360.40px;top:281.43px;font-size:11px;transform:scaleX(1.0154);transform-origin:0 0;color:#111;">11, 174, -127</div>
<div class="abs" style="left:1262px;top:295.3px;width:211px;height:1px;background:#dcdcdc;"></div>
<div class="abs" style="left:1262px;top:296.3px;width:211px;height:1px;background:#fafafa;"></div>
<div class="t" style="left:1265.00px;top:298.78px;font-size:11px;transform:scaleX(0.9152);transform-origin:0 0;color:#111;">Perspective</div>
<div class="t" style="left:1360.40px;top:298.78px;font-size:11px;transform:scaleX(1.0090);transform-origin:0 0;color:#111;">Off</div>
<div class="abs" style="left:1262px;top:312.6px;width:211px;height:1px;background:#dcdcdc;"></div>
<div class="abs" style="left:1262px;top:313.6px;width:211px;height:1px;background:#fafafa;"></div>
<div class="t" style="left:1265.00px;top:316.12px;font-size:11px;transform:scaleX(0.9388);transform-origin:0 0;color:#111;">Lens length</div>
<div class="t" style="left:1360.40px;top:316.12px;font-size:11px;transform:scaleX(0.9994);transform-origin:0 0;color:#111;">50 mm</div>
<div class="abs" style="left:1262px;top:330.0px;width:211px;height:1px;background:#dcdcdc;"></div>
<div class="abs" style="left:1262px;top:331.0px;width:211px;height:1px;background:#fafafa;"></div>
<div class="t" style="left:1265.00px;top:333.47px;font-size:11px;transform:scaleX(0.9651);transform-origin:0 0;color:#111;">Field of view</div>
<div class="t" style="left:1360.40px;top:333.47px;font-size:11px;transform:scaleX(0.9707);transform-origin:0 0;color:#111;">38.5801</div>
<div class="abs" style="left:1262px;top:347.3px;width:211px;height:1px;background:#dcdcdc;"></div>
<div class="abs" style="left:1262px;top:348.3px;width:211px;height:1px;background:#fafafa;"></div>
<div class="t" style="left:1265.00px;top:350.81px;font-size:11px;transform:scaleX(0.9623);transform-origin:0 0;color:#111;">Height</div>
<div class="t" style="left:1360.40px;top:350.81px;font-size:11px;transform:scaleX(0.9865);transform-origin:0 0;color:#9a9a9a;">265 mm</div>
<div class="abs" style="left:1262px;top:364.7px;width:211px;height:1px;background:#dcdcdc;"></div>
<div class="abs" style="left:1262px;top:365.7px;width:211px;height:1px;background:#fafafa;"></div>
<div class="t" style="left:1265.00px;top:368.16px;font-size:11px;transform:scaleX(0.9460);transform-origin:0 0;color:#111;">Width</div>
<div class="t" style="left:1360.40px;top:368.16px;font-size:11px;transform:scaleX(0.9865);transform-origin:0 0;color:#9a9a9a;">399 mm</div>
<div class="abs" style="left:1262px;top:382.0px;width:211px;height:1px;background:#dcdcdc;"></div>
<div class="abs" style="left:1262px;top:383.0px;width:211px;height:1px;background:#fafafa;"></div>
<div class="t" style="left:1265.00px;top:385.50px;font-size:11px;transform:scaleX(0.9711);transform-origin:0 0;color:#111;">Clipping</div>
<div class="t" style="left:1360.40px;top:385.50px;font-size:11px;transform:scaleX(1.0090);transform-origin:0 0;color:#111;">Off</div>
<div class="abs" style="left:1262px;top:399.4px;width:211px;height:1px;background:#dcdcdc;"></div>
<div class="abs" style="left:1262px;top:400.4px;width:211px;height:1px;background:#fafafa;"></div>
<div class="t" style="left:1265.00px;top:402.85px;font-size:11px;transform:scaleX(0.9524);transform-origin:0 0;color:#111;">Front plane</div>
<div class="t" style="left:1360.40px;top:402.85px;font-size:11px;transform:scaleX(0.9907);transform-origin:0 0;color:#111;">0.000000000000 mm</div>
<div class="abs" style="left:1262px;top:416.7px;width:211px;height:1px;background:#dcdcdc;"></div>
<div class="abs" style="left:1262px;top:417.7px;width:211px;height:1px;background:#fafafa;"></div>
<div class="t" style="left:1265.00px;top:420.19px;font-size:11px;transform:scaleX(0.9187);transform-origin:0 0;color:#111;">Back plane</div>
<div class="t" style="left:1360.40px;top:420.19px;font-size:11px;transform:scaleX(0.9907);transform-origin:0 0;color:#111;">0.000000000000 mm</div>
<div class="abs" style="left:1262px;top:434.1px;width:211px;height:1px;background:#dcdcdc;"></div>
<div class="abs" style="left:1262px;top:435.1px;width:211px;height:1px;background:#fafafa;"></div>
<div class="t" style="left:1265.00px;top:437.54px;font-size:11px;transform:scaleX(0.9488);transform-origin:0 0;color:#111;">Visual style</div>
<div class="t" style="left:1360.40px;top:437.54px;font-size:11px;transform:scaleX(0.9272);transform-origin:0 0;color:#111;">Conceptual</div>
<div class="abs" style="left:1262px;top:260.6px;width:1px;height:190.4px;background:#dcdcdc;"></div>
<div class="abs" style="left:1357px;top:260.6px;width:1px;height:190.4px;background:#dcdcdc;"></div>
<div class="abs" style="left:1262px;top:468.4px;width:211px;height:1px;background:#dcdcdc;"></div>
<div class="abs" style="left:1262px;top:469.4px;width:211px;height:1px;background:#fafafa;"></div>
<div class="t" style="left:1265.00px;top:471.89px;font-size:11px;transform:scaleX(0.9590);transform-origin:0 0;color:#111;">Annotation scale</div>
<div class="t" style="left:1360.40px;top:471.89px;font-size:11px;transform:scaleX(0.9940);transform-origin:0 0;color:#111;">1:1</div>
<div class="abs" style="left:1262px;top:485.7px;width:211px;height:1px;background:#dcdcdc;"></div>
<div class="abs" style="left:1262px;top:486.7px;width:211px;height:1px;background:#fafafa;"></div>
<div class="t" style="left:1265.00px;top:489.19px;font-size:11px;transform:scaleX(0.9894);transform-origin:0 0;color:#111;">Default lighting</div>
<div class="t" style="left:1360.40px;top:489.19px;font-size:11px;transform:scaleX(0.9268);transform-origin:0 0;color:#111;">On</div>
<div class="abs" style="left:1262px;top:503px;width:211px;height:1px;background:#dcdcdc;"></div>
<div class="abs" style="left:1262px;top:468.4px;width:1px;height:35px;background:#dcdcdc;"></div>
<div class="abs" style="left:1357px;top:468.4px;width:1px;height:35px;background:#dcdcdc;"></div>
<svg style="left:0;top:0" width="1510" height="902" viewBox="0 0 1510 902"><rect x="1250.5" y="230.5" width="8" height="8" fill="#fafafa" stroke="#c4c4c4" stroke-width="1"/><path d="M1252.2 234.5H1256.8" stroke="#2a3c9c" stroke-width="1.1"/><path d="M1254.5 232.2V236.8" stroke="#2a3c9c" stroke-width="1.1"/><rect x="1250.5" y="247.7" width="8" height="8" fill="#fafafa" stroke="#c4c4c4" stroke-width="1"/><path d="M1252.2 251.7H1256.8" stroke="#2a3c9c" stroke-width="1.1"/><rect x="1250.5" y="265.2" width="8" height="8" fill="#fafafa" stroke="#c4c4c4" stroke-width="1"/><path d="M1252.2 269.2H1256.8" stroke="#2a3c9c" stroke-width="1.1"/><path d="M1254.5 266.9V271.5" stroke="#2a3c9c" stroke-width="1.1"/><rect x="1250.5" y="282.5" width="8" height="8" fill="#fafafa" stroke="#c4c4c4" stroke-width="1"/><path d="M1252.2 286.5H1256.8" stroke="#2a3c9c" stroke-width="1.1"/><path d="M1254.5 284.2V288.8" stroke="#2a3c9c" stroke-width="1.1"/><rect x="1250.5" y="455.5" width="8" height="8" fill="#fafafa" stroke="#c4c4c4" stroke-width="1"/><path d="M1252.2 459.5H1256.8" stroke="#2a3c9c" stroke-width="1.1"/><path d="M1422.7 211.5L1426.3 215.2L1430 211.5" fill="none" stroke="#444" stroke-width="1"/><path d="M1442 207.5H1449.5L1446.8 211V215.5L1444.8 214.3V211Z" fill="none" stroke="#666" stroke-width=".9" stroke-linejoin="round"/><path d="M1449.3 211L1447.5 214.3H1449.5L1448.5 217L1451.3 213.3H1449.3L1450.5 211Z" fill="#f5a623"/><path d="M1456.7 211.5C1459 208 1465 208 1467.5 211.5C1465 215 1459 215 1456.7 211.5Z" fill="none" stroke="#4a6a9a" stroke-width=".9"/><circle cx="1462" cy="211.5" r="1.7" fill="none" stroke="#4a6a9a" stroke-width=".9"/><g stroke="#6a6a6a" stroke-width="1" fill="none"><path d="M1484.5 213.5H1487M1490 213.5H1500M1484.5 222.5H1494M1497 222.5H1500"/><circle cx="1488.5" cy="213.5" r="1.5"/><circle cx="1495.5" cy="222.5" r="1.5"/></g><g stroke="#888" stroke-width="1" fill="none" stroke-linejoin="round"><path d="M1488 251.5H1501L1496 257.5H1483.5Z"/><path d="M1501 255L1496 261H1485M1501 258.7L1496 264.7H1485"/><path d="M1486.5 259.5L1485 261L1486.5 262.5M1486.5 263.2L1485 264.7L1486.5 266.2"/></g><g stroke="#888" stroke-width="1" fill="none"><rect x="1485.7" y="289.5" width="4.6" height="4.6"/><rect x="1494" y="289.5" width="4.6" height="4.6"/><rect x="1485.7" y="298" width="4.6" height="4.6"/><rect x="1494" y="298" width="4.6" height="4.6"/><path d="M1485.2 296.3H1490.8M1493.5 296.3H1499M1485.2 304.7H1490.8M1493.5 304.7H1499"/></g><g stroke="#888" stroke-width="1" fill="none"><path d="M1485 335.5A7.3 7.5 0 1 1 1499.6 335.5C1499 339 1495 341.5 1494 343.5H1490.6C1489.6 341.5 1485.6 339 1485 335.5Z"/><path d="M1489.5 329C1488 333 1489 339 1491.5 343.5M1495 329C1496.5 333 1495.5 339 1493 343.5M1492.3 328V343.5"/><circle cx="1492.3" cy="346.3" r="1.2"/></g><g stroke="#777" stroke-width="1" fill="none"><rect x="1484.5" y="369" width="16" height="13"/><path d="M1484.5 373.3H1500.5M1484.5 377.7H1500.5M1489.8 369V382M1495.2 369V382"/></g><g stroke="#888" stroke-width="1" fill="none" stroke-linejoin="round"><path d="M1486 419.5L1493 408.5A3 3 0 0 1 1498.5 410.5L1491.5 420.5"/><circle cx="1488.3" cy="418.7" r="2.6"/><path d="M1492 421.5H1500V411.5L1494 419.7H1498V416"/></g><g stroke="#555" stroke-width="1" fill="none" stroke-linejoin="round"><path d="M1488.5 459.5H1497A3.7 3.7 0 0 0 1497.5 452.2A5.2 5.2 0 0 0 1487.5 451.5A4 4 0 0 0 1488.5 459.5Z"/><path d="M1489.5 454H1495L1493.5 452.5M1496 456.5H1490.5L1492 458"/></g></svg>
<!-- sec_status -->
<div class="abs" style="left:0px;top:885px;width:1510px;height:17px;background:#fbfbfb;"></div>
<div class="abs" style="left:0px;top:900px;width:1510px;height:2px;background:#f0f0f0;"></div>
<div class="abs" style="left:0px;top:885px;width:1px;height:17px;background:#5c6774;"></div>
<div class="t" style="left:4.00px;top:888.49px;font-size:11px;transform:scaleX(0.8648);transform-origin:0 0;color:#555;">Ready</div>
<div class="t" style="left:657.60px;top:888.49px;font-size:11px;transform:scaleX(1.0058);transform-origin:0 0;color:#222;">-74, 137, 0</div>
<div class="abs" style="left:654.1px;top:887px;width:1px;height:14px;background:#e2e2e2;"></div>
<div class="t" style="left:716.00px;top:888.49px;font-size:11px;transform:scaleX(0.9407);transform-origin:0 0;color:#222;">Standard</div>
<div class="abs" style="left:712.5px;top:887px;width:1px;height:14px;background:#e2e2e2;"></div>
<div class="t" style="left:764.00px;top:888.49px;font-size:11px;transform:scaleX(0.9288);transform-origin:0 0;color:#222;">ISO</div>
<div class="abs" style="left:760.5px;top:887px;width:1px;height:14px;background:#e2e2e2;"></div>
<div class="t" style="left:787.50px;top:888.49px;font-size:11px;transform:scaleX(0.8896);transform-origin:0 0;color:#222;">Mechanical</div>
<div class="abs" style="left:784.0px;top:887px;width:1px;height:14px;background:#e2e2e2;"></div>
<div class="t" style="left:847.50px;top:888.49px;font-size:11px;transform:scaleX(0.8179);transform-origin:0 0;color:#b4b4b4;">SNAP</div>
<div class="abs" style="left:844.0px;top:887px;width:1px;height:14px;background:#e2e2e2;"></div>
<div class="t" style="left:880.50px;top:888.49px;font-size:11px;transform:scaleX(0.9273);transform-origin:0 0;color:#b4b4b4;">GRID</div>
<div class="abs" style="left:877.0px;top:887px;width:1px;height:14px;background:#e2e2e2;"></div>
<div class="t" style="left:912.00px;top:888.49px;font-size:11px;transform:scaleX(0.8934);transform-origin:0 0;color:#b4b4b4;">HIDEOBJECTS</div>
<div class="abs" style="left:908.5px;top:887px;width:1px;height:14px;background:#e2e2e2;"></div>
<div class="t" style="left:987.00px;top:888.49px;font-size:11px;transform:scaleX(0.8957);transform-origin:0 0;color:#b4b4b4;">ORTHO</div>
<div class="abs" style="left:983.5px;top:887px;width:1px;height:14px;background:#e2e2e2;"></div>
<div class="abs" style="left:1027.0px;top:887px;width:36.1px;height:13.5px;background:#d2d2d2;"></div>
<div class="t" style="left:1028.50px;top:888.49px;font-size:11px;transform:scaleX(0.8876);transform-origin:0 0;color:#222;">POLAR</div>
<div class="abs" style="left:1025.0px;top:887px;width:1px;height:14px;background:#e2e2e2;"></div>
<div class="abs" style="left:1066.2px;top:887px;width:36.1px;height:13.5px;background:#d2d2d2;"></div>
<div class="t" style="left:1067.70px;top:888.49px;font-size:11px;transform:scaleX(0.8876);transform-origin:0 0;color:#222;">ESNAP</div>
<div class="abs" style="left:1064.2px;top:887px;width:1px;height:14px;background:#e2e2e2;"></div>
<div class="abs" style="left:1104.5px;top:887px;width:42px;height:13.5px;background:#d2d2d2;"></div>
<div class="t" style="left:1106.00px;top:888.49px;font-size:11px;transform:scaleX(0.8741);transform-origin:0 0;color:#222;">STRACK</div>
<div class="abs" style="left:1102.5px;top:887px;width:1px;height:14px;background:#e2e2e2;"></div>
<div class="t" style="left:1151.70px;top:888.49px;font-size:11px;transform:scaleX(0.8838);transform-origin:0 0;color:#b4b4b4;">LWT</div>
<div class="abs" style="left:1148.2px;top:887px;width:1px;height:14px;background:#e2e2e2;"></div>
<div class="t" style="left:1178.00px;top:888.49px;font-size:11px;transform:scaleX(0.9040);transform-origin:0 0;color:#222;">TILE</div>
<div class="abs" style="left:1174.5px;top:887px;width:1px;height:14px;background:#e2e2e2;"></div>
<div class="t" style="left:1205.90px;top:888.49px;font-size:11px;transform:scaleX(0.9482);transform-origin:0 0;color:#222;">1:1</div>
<div class="abs" style="left:1202.4px;top:887px;width:1px;height:14px;background:#e2e2e2;"></div>
<div class="abs" style="left:1225.0px;top:887px;width:30.0px;height:13.5px;background:#d2d2d2;"></div>
<div class="t" style="left:1226.50px;top:888.49px;font-size:11px;transform:scaleX(0.8662);transform-origin:0 0;color:#222;">DUCS</div>
<div class="abs" style="left:1223.0px;top:887px;width:1px;height:14px;background:#e2e2e2;"></div>
<div class="abs" style="left:1258.1px;top:887px;width:23.2px;height:13.5px;background:#d2d2d2;"></div>
<div class="t" style="left:1259.60px;top:888.49px;font-size:11px;transform:scaleX(0.8697);transform-origin:0 0;color:#222;">DYN</div>
<div class="abs" style="left:1256.1px;top:887px;width:1px;height:14px;background:#e2e2e2;"></div>
<div class="abs" style="left:1284.4px;top:887px;width:32.1px;height:13.5px;background:#d2d2d2;"></div>
<div class="t" style="left:1285.90px;top:888.49px;font-size:11px;transform:scaleX(0.9156);transform-origin:0 0;color:#222;">QUAD</div>
<div class="abs" style="left:1282.4px;top:887px;width:1px;height:14px;background:#e2e2e2;"></div>
<div class="abs" style="left:1319.9px;top:887px;width:15.1px;height:13.5px;background:#d2d2d2;"></div>
<div class="t" style="left:1321.40px;top:888.49px;font-size:11px;transform:scaleX(0.8365);transform-origin:0 0;color:#222;">RT</div>
<div class="abs" style="left:1317.9px;top:887px;width:1px;height:14px;background:#e2e2e2;"></div>
<div class="abs" style="left:1338.9px;top:887px;width:14.3px;height:13.5px;background:#d2d2d2;"></div>
<div class="t" style="left:1340.40px;top:888.49px;font-size:11px;transform:scaleX(0.7395);transform-origin:0 0;color:#222;">SC</div>
<div class="abs" style="left:1336.9px;top:887px;width:1px;height:14px;background:#e2e2e2;"></div>
<div class="abs" style="left:1356.3px;top:887px;width:23.2px;height:13.5px;background:#d2d2d2;"></div>
<div class="t" style="left:1357.80px;top:888.49px;font-size:11px;transform:scaleX(0.8931);transform-origin:0 0;color:#222;">HKA</div>
<div class="abs" style="left:1354.3px;top:887px;width:1px;height:14px;background:#e2e2e2;"></div>
<div class="t" style="left:1384.00px;top:888.49px;font-size:11px;transform:scaleX(0.8888);transform-origin:0 0;color:#b4b4b4;">LOCKUI</div>
<div class="abs" style="left:1380.5px;top:887px;width:1px;height:14px;background:#e2e2e2;"></div>
<div class="t" style="left:1426.50px;top:888.49px;font-size:11px;transform:scaleX(0.9202);transform-origin:0 0;color:#222;">None</div>
<div class="abs" style="left:1423.0px;top:887px;width:1px;height:14px;background:#e2e2e2;"></div>
<svg style="left:0;top:0" width="1510" height="902" viewBox="0 0 1510 902"><circle cx="1460.8" cy="894" r="4.6" fill="#f5a623"/><path d="M1460.8 892.5V896.5M1460.8 891V891.6" stroke="#fff4d6" stroke-width="1.1"/><path d="M1474.5 893H1479.5L1477 895.8Z" fill="#111"/><g fill="#b0b0b0"><rect x="1506" y="892" width="1.4" height="1.4"/><rect x="1503" y="895" width="1.4" height="1.4"/><rect x="1506" y="895" width="1.4" height="1.4"/><rect x="1500" y="898" width="1.4" height="1.4"/><rect x="1503" y="898" width="1.4" height="1.4"/><rect x="1506" y="898" width="1.4" height="1.4"/></g></svg>
</body></html>
